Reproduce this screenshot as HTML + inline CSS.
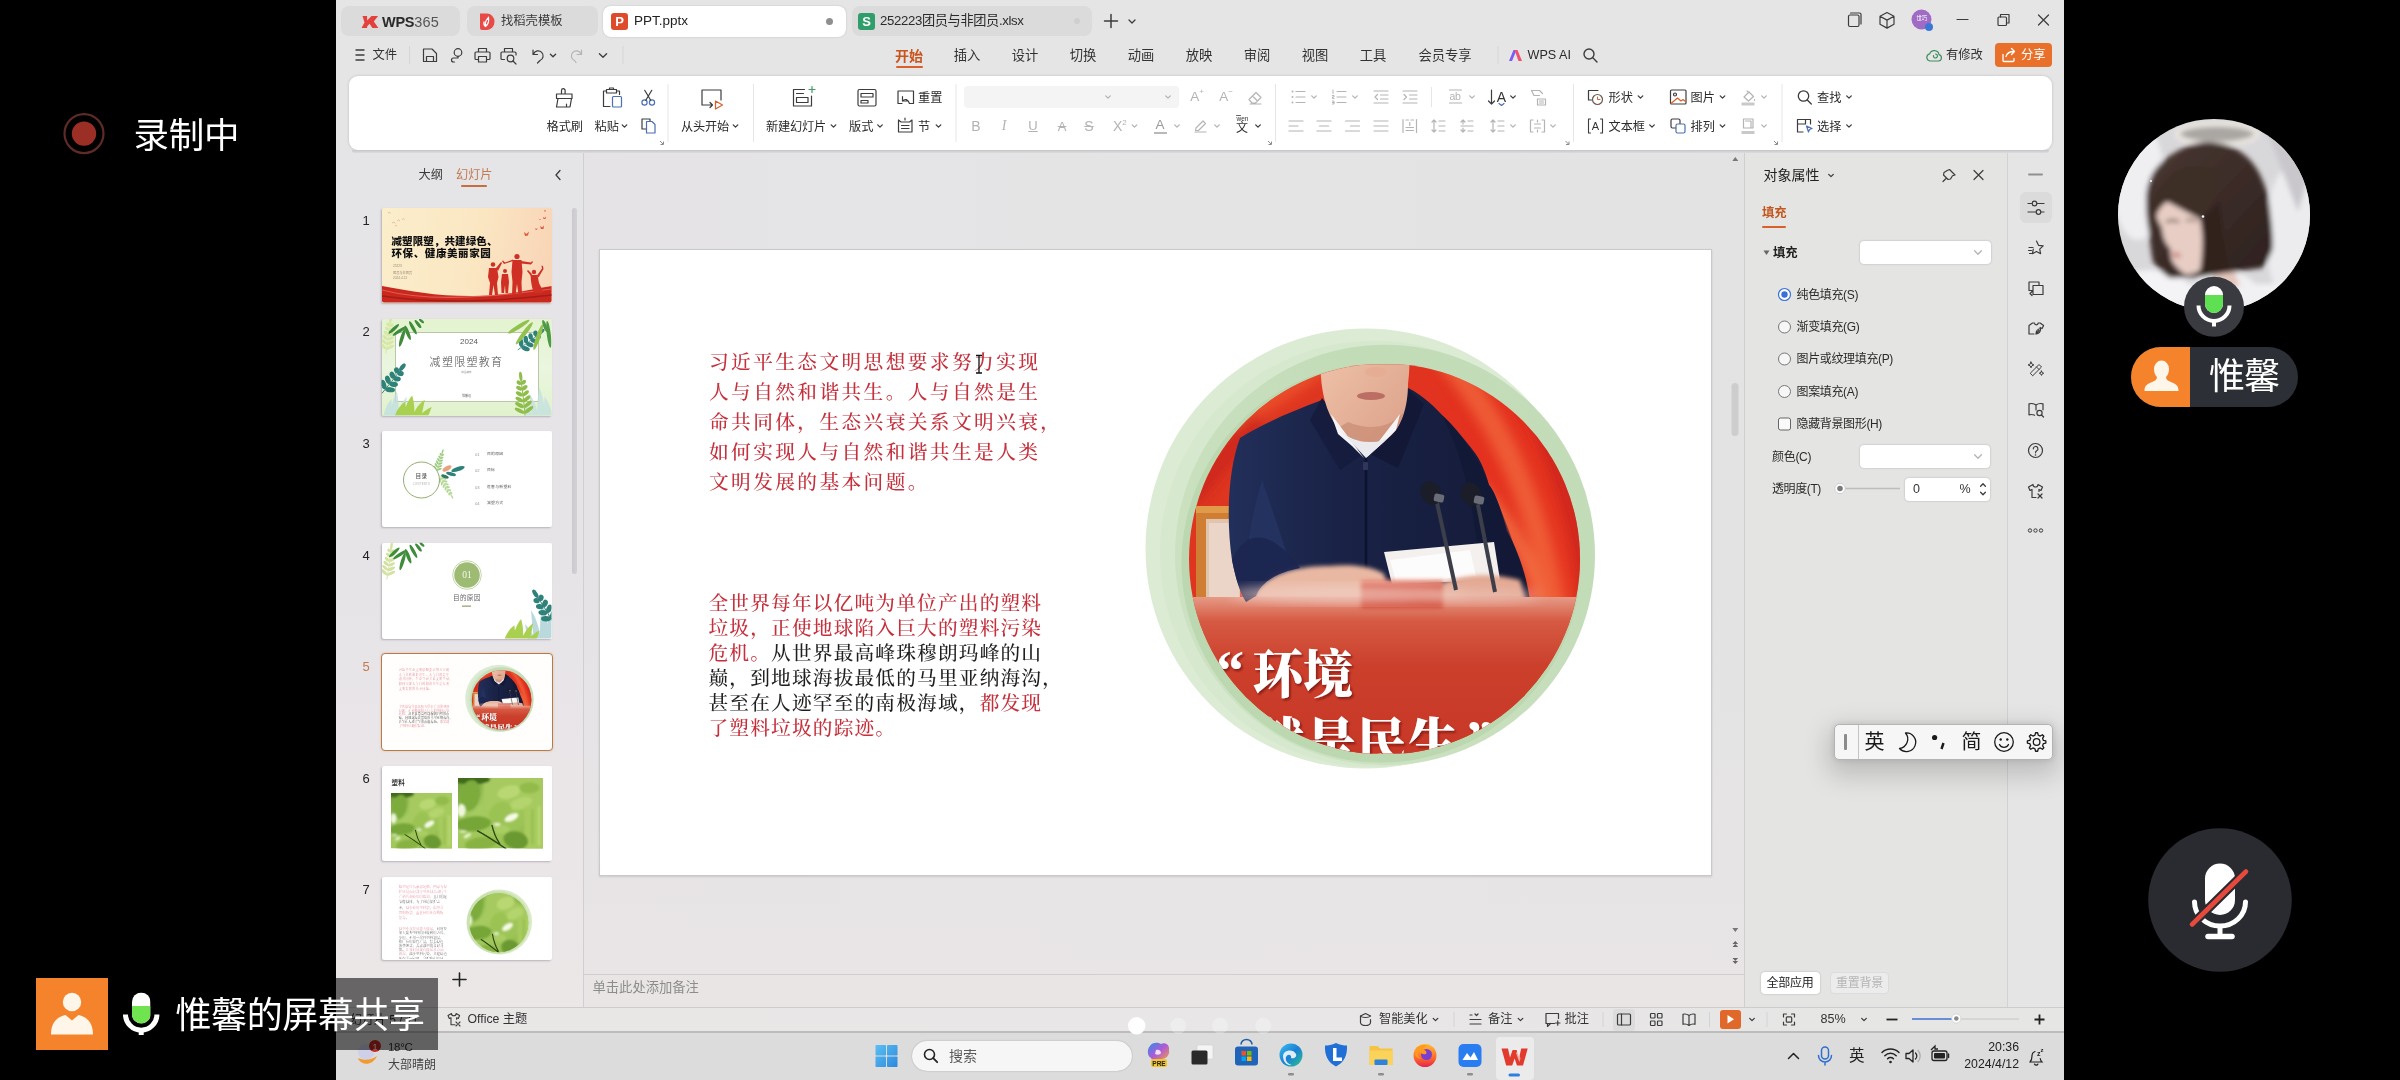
<!DOCTYPE html>
<html lang="zh-CN">
<head>
<meta charset="utf-8">
<title>WPS PPT screen share</title>
<style>
*{box-sizing:border-box;margin:0;padding:0}
html,body{width:2400px;height:1080px;overflow:hidden;background:#000}
body{position:relative;will-change:transform;font-family:"Liberation Sans","Noto Sans CJK SC",sans-serif;color:#2b2b2b;font-size:12px}
.a{position:absolute}
.t{position:absolute;white-space:nowrap;line-height:1}
svg{position:absolute;overflow:visible}
svg.L{left:0;top:0;width:2400px;height:1080px;pointer-events:none}
.ic{fill:none;stroke:#3c3c3c;stroke-width:1.2;stroke-linecap:round;stroke-linejoin:round}
.ig{fill:none;stroke:#b4b4b4;stroke-width:1.2;stroke-linecap:round;stroke-linejoin:round}
#app{position:absolute;left:336px;top:0;width:1728px;height:1080px;background:#e5e5e5}
.serif{font-family:"Liberation Serif","Noto Serif CJK SC",serif}
</style>
</head>
<body>
<div id="app"></div>

<!-- 10_tabs.py -->
<div class="a" style="left:341px;top:6px;width:119px;height:30px;background:#dbdbdb;border-radius:8px"></div><div class="a" style="left:467px;top:6px;width:131px;height:30px;background:#dbdbdb;border-radius:8px"></div><div class="a" style="left:603px;top:5.5px;width:243px;height:31px;background:#fff;border-radius:8px;box-shadow:0 0 2px rgba(0,0,0,.18)"></div><div class="a" style="left:852px;top:6px;width:240px;height:30px;background:#dbdbdb;border-radius:8px"></div><div class="t " style="left:382px;top:14.75px;font-size:14.5px;color:#2a2a2a;font-weight:700;"><b style="font-weight:700;letter-spacing:-.3px">WPS</b><span style="color:#555;font-weight:400;letter-spacing:.2px">365</span></div><div class="t " style="left:501px;top:15.35px;font-size:12.3px;color:#3a3a3a;font-weight:400;">找稻壳模板</div><div class="t " style="left:634px;top:14.25px;font-size:13.5px;color:#222;font-weight:400;">PPT.pptx</div><div class="t " style="left:880px;top:14.4px;font-size:13.2px;color:#2b2b2b;font-weight:400;letter-spacing:-.35px">252223团员与非团员.xlsx</div><div class="a" style="left:826px;top:18px;width:7px;height:7px;background:#8f8f8f;border-radius:50%"></div><div class="a" style="left:1073.5px;top:18px;width:6px;height:6px;background:#cfcfcf;border-radius:50%"></div><svg class="L" viewBox="0 0 2400 1080"><path d="M362.5 16 h4.6 l0 4.6 l4.4 -4.6 h6.6 l-4.3 5.6 l4.6 6.4 h-6 l-2.9 -4.2 l-2.4 2.6 v1.6 h-5.6 l3 -5.5z" fill="#e5413c"/><path d="M480 13.5 h7 a7.5 8.2 0 0 1 0 16.4 h-5 a2 2 0 0 1 -2 -2z" fill="#e84a45"/><path d="M486 26 c-1.5-3 0-6 2.5-8.5 c.6 3.4 0 6.2 -2.5 8.500 M485.500 26.500 c-1.500-1.200 -2-2.800 -1.500-4.600" fill="none" stroke="#fff" stroke-width="1.200" stroke-linecap="round"/><rect x="611" y="13" width="17" height="17" rx="3" fill="#dd4b2b"/><text x="619.5" y="26.3" font-family="Liberation Sans, sans-serif" font-weight="700" font-size="13" fill="#fff" text-anchor="middle">P</text><rect x="858" y="13" width="17" height="17" rx="3" fill="#2f9e6b"/><text x="866.5" y="26.300" font-family="Liberation Sans, sans-serif" font-weight="700" font-size="13" fill="#fff" text-anchor="middle">S</text><path class="ic" style="stroke-width:1.5" d="M1104.500 21 h13 M1111 14.500 v13"/><path class="ic" style="stroke-width:1.3" d="M1129 20 l3 3 l3 -3"/><rect class="ic" x="1848.500" y="15" width="10.500" height="11.500" rx="1.500"/><path class="ic" d="M1850.500 13 h9 a1.500 1.500 0 0 1 1.500 1.500 v9.500"/><path class="ic" d="M1887 12.500 l7 3.800 v8 l-7 3.800 l-7 -3.800 v-8z M1880 16.300 l7 3.800 l7 -3.800 M1887 20.100 v8"/><circle cx="1921.500" cy="19.500" r="10" fill="#a06bc4"/><circle cx="1929" cy="27" r="4" fill="#3a78d8"/><path class="ic" d="M1957 19.500 h11"/><rect class="ic" x="1998" y="17" width="8.500" height="8.500" rx="1"/><path class="ic" d="M2000.500 17 v-2.500 h8.500 v8.500 h-2.500"/><path class="ic" d="M2038.500 15 l10 10 M2048.500 15 l-10 10"/></svg><div class="t " style="left:1916.5px;top:15.75px;font-size:5.5px;color:#fff;font-weight:400;letter-spacing:-.3px">世巧</div>
<!-- 11_menu.py -->
<div class="t " style="left:372.5px;top:48.85px;font-size:12.3px;color:#333;font-weight:400;">文件</div><div class="t " style="left:909px;top:48.5px;font-size:14px;color:#c8541e;font-weight:700;transform:translateX(-50%);">开始</div><div class="a" style="left:895.5px;top:66px;width:27px;height:2px;background:#d9602a;border-radius:1px"></div><div class="t " style="left:967px;top:48.85px;font-size:13.3px;color:#333;font-weight:400;transform:translateX(-50%);">插入</div><div class="t " style="left:1025px;top:48.85px;font-size:13.3px;color:#333;font-weight:400;transform:translateX(-50%);">设计</div><div class="t " style="left:1083px;top:48.85px;font-size:13.3px;color:#333;font-weight:400;transform:translateX(-50%);">切换</div><div class="t " style="left:1141px;top:48.85px;font-size:13.3px;color:#333;font-weight:400;transform:translateX(-50%);">动画</div><div class="t " style="left:1199px;top:48.85px;font-size:13.3px;color:#333;font-weight:400;transform:translateX(-50%);">放映</div><div class="t " style="left:1257px;top:48.85px;font-size:13.3px;color:#333;font-weight:400;transform:translateX(-50%);">审阅</div><div class="t " style="left:1315px;top:48.85px;font-size:13.3px;color:#333;font-weight:400;transform:translateX(-50%);">视图</div><div class="t " style="left:1373px;top:48.85px;font-size:13.3px;color:#333;font-weight:400;transform:translateX(-50%);">工具</div><div class="t " style="left:1445px;top:48.85px;font-size:13.3px;color:#333;font-weight:400;transform:translateX(-50%);">会员专享</div><div class="t " style="left:1527.5px;top:49.2px;font-size:12.6px;color:#2b2b2b;font-weight:400;">WPS AI</div><div class="t " style="left:1946px;top:49.35px;font-size:12.3px;color:#333;font-weight:400;">有修改</div><div class="a" style="left:1995px;top:43px;width:56.5px;height:24px;background:#e8702a;border-radius:4px"></div><div class="t " style="left:2021px;top:49.35px;font-size:12.3px;color:#fff;font-weight:400;">分享</div><svg class="L" viewBox="0 0 2400 1080"><path class="ic" style="stroke-width:1.4" d="M356 50 h8 M356 55 h8 M356 60 h8"/><path d="M409.500 46 v18 M623 46 v18 M1498 46 v18" stroke="#d6d5d5" stroke-width="1" fill="none"/><path class="ic" d="M423.500 49 h8.500 l4.500 4.500 v8 h-13z M426.500 61.500 v-5 h7 v5"/><circle class="ic" cx="458" cy="52.500" r="3.800"/><path class="ic" d="M458 56.300 v1.700 h-4.500 a2 2 0 0 0 0 4 h1"/><path class="ic" d="M478.500 52 v-3.500 h8 v3.500 M478.500 59.500 h-2.500 a1 1 0 0 1 -1 -1 v-5.500 a1 1 0 0 1 1 -1 h13 a1 1 0 0 1 1 1 v5.500 a1 1 0 0 1 -1 1 h-2.500 M478.500 56.500 h8 v5.500 h-8z"/><path class="ic" d="M504.500 52 v-3.500 h8 v3.500 M504.500 59.500 h-2.500 a1 1 0 0 1 -1 -1 v-5.500 a1 1 0 0 1 1 -1 h13 a1 1 0 0 1 1 1 v2"/><circle class="ic" cx="510.500" cy="58.500" r="3.300"/><path class="ic" d="M513 61 l3 3"/><path class="ic" d="M533 50 v4.500 h4.500 M533.500 54 a5 5 0 1 1 6.500 6.500 l-2.500 2.500"/><path class="ic" style="stroke-width:1.3" d="M550.4 54.2 l2.6 2.6 l2.6 -2.6"/><path class="ig" d="M581.500 50 v4.500 h-4.500 M581 54 a5 5 0 1 0 -6.500 6.500 l1.500 2"/><path class="ic" style="stroke-width:1.3" d="M599.4 53.7 l3.6 3.6 l3.6 -3.6"/><path d="M1509 61 l4.500 -11 l3 0 l-4.500 11z" fill="#7a5af8"/><path d="M1514.500 50 l3 0 l4.500 11 l-3.500 0z" fill="#f0506e"/><circle class="ic" cx="1589" cy="54" r="5" style="stroke-width:1.400"/><path class="ic" style="stroke-width:1.400" d="M1592.800 57.800 l4.200 4.200"/><path class="ic" d="M1930 61 h8.500 a3.200 3.200 0 0 0 .5 -6.300 a4.800 4.800 0 0 0 -9.300 -.8 a3.600 3.600 0 0 0 .3 7.100z M1933.500 55.500 a2 2 0 1 0 2 -1.500" style="stroke:#3f8f5f"/><path d="M2003 54.500 v6 a1 1 0 0 0 1 1 h9 a1 1 0 0 0 1 -1 v-2 M2006 56.500 c1 -3.500 4 -5 8 -5 M2011.500 48.500 l3 3 l-3 3" fill="none" stroke="#fff" stroke-width="1.300" stroke-linecap="round" stroke-linejoin="round"/></svg>
<!-- 20_ribbon.py -->
<div class="a" style="left:348.5px;top:75.5px;width:1703.5px;height:74px;background:#fff;border-radius:9px;box-shadow:0 0 3px rgba(0,0,0,.18)"></div><div class="t " style="left:546.5px;top:120.5px;font-size:12.2px;color:#2b2b2b;font-weight:400;">格式刷</div><div class="t " style="left:594.5px;top:120.5px;font-size:12.2px;color:#2b2b2b;font-weight:400;">粘贴</div><div class="t " style="left:681px;top:120.5px;font-size:12.2px;color:#2b2b2b;font-weight:400;letter-spacing:-.2px">从头开始</div><div class="t " style="left:766px;top:120.5px;font-size:12.2px;color:#2b2b2b;font-weight:400;letter-spacing:-.2px">新建幻灯片</div><div class="t " style="left:849px;top:120.5px;font-size:12.2px;color:#2b2b2b;font-weight:400;">版式</div><div class="t " style="left:918px;top:92.2px;font-size:12.2px;color:#2b2b2b;font-weight:400;">重置</div><div class="t " style="left:918px;top:120.5px;font-size:12.2px;color:#2b2b2b;font-weight:400;">节</div><div class="t " style="left:1608.5px;top:92.2px;font-size:12.2px;color:#2b2b2b;font-weight:400;">形状</div><div class="t " style="left:1608.5px;top:120.5px;font-size:12.2px;color:#2b2b2b;font-weight:400;">文本框</div><div class="t " style="left:1690.5px;top:92.2px;font-size:12.2px;color:#2b2b2b;font-weight:400;">图片</div><div class="t " style="left:1690.5px;top:120.5px;font-size:12.2px;color:#2b2b2b;font-weight:400;">排列</div><div class="t " style="left:1817px;top:92.2px;font-size:12.2px;color:#2b2b2b;font-weight:400;">查找</div><div class="t " style="left:1817px;top:120.5px;font-size:12.2px;color:#2b2b2b;font-weight:400;">选择</div><div class="a" style="left:964px;top:86px;width:215px;height:22px;background:#f4f4f4;border-radius:4px"></div><div class="t " style="left:976px;top:119px;font-size:14px;color:#b3b3b3;font-weight:400;transform:translateX(-50%);">B</div><div class="t serif" style="left:1004px;top:119px;font-size:14px;color:#b3b3b3;font-weight:400;transform:translateX(-50%);"><i>I</i></div><div class="t " style="left:1033px;top:119px;font-size:13px;color:#b3b3b3;font-weight:400;transform:translateX(-50%);text-decoration:underline">U</div><div class="t " style="left:1062px;top:119.5px;font-size:13px;color:#b3b3b3;font-weight:400;transform:translateX(-50%);text-decoration:line-through">A</div><div class="t " style="left:1089px;top:119px;font-size:14px;color:#b3b3b3;font-weight:400;transform:translateX(-50%);text-decoration:line-through">S</div><div class="t " style="left:1113px;top:119px;font-size:14px;color:#b3b3b3;font-weight:400;">X<sup style="font-size:8px;vertical-align:6px;line-height:0">2</sup></div><div class="t " style="left:1160px;top:117.75px;font-size:13.5px;color:#9a9a9a;font-weight:400;transform:translateX(-50%);">A</div><div class="a" style="left:1153.5px;top:131.5px;width:13px;height:2.5px;background:#b9b9b9;"></div><div class="t " style="left:1197px;top:90.25px;font-size:13.5px;color:#b3b3b3;font-weight:400;transform:translateX(-50%);">A<sup style="font-size:8px;vertical-align:7px;line-height:0">+</sup></div><div class="t " style="left:1226px;top:90.25px;font-size:13.5px;color:#b3b3b3;font-weight:400;transform:translateX(-50%);">A<sup style="font-size:8px;vertical-align:7px;line-height:0">−</sup></div><div class="t " style="left:1242px;top:121.5px;font-size:12px;color:#333;font-weight:400;transform:translateX(-50%);">文</div><div class="t " style="left:1242.5px;top:115.75px;font-size:6.5px;color:#333;font-weight:400;transform:translateX(-50%);">wen</div><div class="t " style="left:1449.5px;top:90.75px;font-size:10.5px;color:#b3b3b3;font-weight:400;letter-spacing:-.3px">ab</div><div class="t " style="left:1501.5px;top:89.5px;font-size:14px;color:#333;font-weight:400;transform:translateX(-50%);">A</div><div class="t " style="left:1595.5px;top:121px;font-size:11px;color:#333;font-weight:400;transform:translateX(-50%);">A</div><svg class="L" viewBox="0 0 2400 1080"><path d="M668 84 v58" stroke="#e6e6e6" stroke-width="1"/><path d="M753.5 84 v58" stroke="#e6e6e6" stroke-width="1"/><path d="M956 84 v58" stroke="#e6e6e6" stroke-width="1"/><path d="M1275.5 84 v58" stroke="#e6e6e6" stroke-width="1"/><path d="M1573.5 84 v58" stroke="#e6e6e6" stroke-width="1"/><path d="M1782 84 v58" stroke="#e6e6e6" stroke-width="1"/><path d="M1431.500 87 v20" stroke="#e6e6e6" stroke-width="1"/><path d="M660 141 l3 3 M663.5 141.500 v3 h-3" stroke="#8a8a8a" stroke-width="1" fill="none"/><path d="M1268 141 l3 3 M1271.5 141.500 v3 h-3" stroke="#8a8a8a" stroke-width="1" fill="none"/><path d="M1565.5 141 l3 3 M1569 141.500 v3 h-3" stroke="#8a8a8a" stroke-width="1" fill="none"/><path d="M1774 141 l3 3 M1777.5 141.500 v3 h-3" stroke="#8a8a8a" stroke-width="1" fill="none"/><path class="ic" style="stroke-width:1.3" d="M622.2 124.85 l2.3 2.3 l2.3 -2.3"/><path class="ic" style="stroke-width:1.3" d="M733.2 124.85 l2.3 2.3 l2.3 -2.3"/><path class="ic" style="stroke-width:1.3" d="M831.2 124.85 l2.3 2.3 l2.3 -2.3"/><path class="ic" style="stroke-width:1.3" d="M877.7 124.85 l2.3 2.3 l2.3 -2.3"/><path class="ic" style="stroke-width:1.3" d="M936.2 124.85 l2.3 2.3 l2.3 -2.3"/><path class="ic" style="stroke-width:1.3" d="M1255.7 124.85 l2.3 2.3 l2.3 -2.3"/><path class="ic" style="stroke-width:1.3" d="M1510.7 95.85 l2.3 2.3 l2.3 -2.3"/><path class="ic" style="stroke-width:1.3" d="M1638.2 95.85 l2.3 2.3 l2.3 -2.3"/><path class="ic" style="stroke-width:1.3" d="M1649.7 124.85 l2.3 2.3 l2.3 -2.3"/><path class="ic" style="stroke-width:1.3" d="M1720.2 95.85 l2.3 2.3 l2.3 -2.3"/><path class="ic" style="stroke-width:1.3" d="M1720.2 124.85 l2.3 2.3 l2.3 -2.3"/><path class="ic" style="stroke-width:1.3" d="M1846.7 95.85 l2.3 2.3 l2.3 -2.3"/><path class="ic" style="stroke-width:1.3" d="M1846.7 124.85 l2.3 2.3 l2.3 -2.3"/><path class="ig" style="stroke-width:1.3" d="M1105.7 95.85 l2.3 2.3 l2.3 -2.3"/><path class="ig" style="stroke-width:1.3" d="M1165.7 95.85 l2.3 2.3 l2.3 -2.3"/><path class="ig" style="stroke-width:1.3" d="M1132.2 124.85 l2.3 2.3 l2.3 -2.3"/><path class="ig" style="stroke-width:1.3" d="M1174.7 124.85 l2.3 2.3 l2.3 -2.3"/><path class="ig" style="stroke-width:1.3" d="M1214.7 124.85 l2.3 2.3 l2.3 -2.3"/><path class="ig" style="stroke-width:1.3" d="M1311.7 95.85 l2.3 2.3 l2.3 -2.3"/><path class="ig" style="stroke-width:1.3" d="M1352.7 95.85 l2.3 2.3 l2.3 -2.3"/><path class="ig" style="stroke-width:1.3" d="M1469.7 95.85 l2.3 2.3 l2.3 -2.3"/><path class="ig" style="stroke-width:1.3" d="M1510.7 124.85 l2.3 2.3 l2.3 -2.3"/><path class="ig" style="stroke-width:1.3" d="M1550.7 124.85 l2.3 2.3 l2.3 -2.3"/><path class="ig" style="stroke-width:1.3" d="M1761.7 95.85 l2.3 2.3 l2.3 -2.3"/><path class="ig" style="stroke-width:1.3" d="M1761.7 124.85 l2.3 2.3 l2.3 -2.3"/><path class="ic" d="M561.500 94 v-3.500 a1.800 1.800 0 0 1 3.600 0 v3.500 M556.500 94 h15.500 v4.500 h-15.500z M558 98.500 l-1.500 8.500 h13.500 l1.500 -8.500 M566.500 107 v-3"/><path class="ic" d="M606.500 91 h-3 v15.500 h6.500 M616.500 91 h3 v3.500 M606.500 89.500 h10 v3.500 h-10z M609.500 89.500 v-1.500 h4 v1.500"/><rect class="ic" x="612.500" y="96.500" width="9" height="10.500" rx="1" style="stroke:#4a6fb5"/><circle class="ic" cx="644.500" cy="102.500" r="2.600" style="stroke:#4a6fb5"/><circle class="ic" cx="652" cy="102.500" r="2.600" style="stroke:#4a6fb5"/><path class="ic" d="M645.800 100.300 l6 -10 M650.700 100.300 l-6 -10"/><path class="ic" d="M646.500 129 h-4.500 v-10 h8 v2.500"/><path class="ic" d="M646.500 121.500 h5.500 l3 3 v8.500 h-8.500z" style="stroke:#4a6fb5"/><path class="ic" d="M721 100 v-10 h-19 v15 h10.500 M710 102.500 l2.500 2.500 l-2.500 2.500"/><path class="ic" d="M715.500 101 l7 4 l-7 4z" style="stroke:#d9602a"/><path class="ic" d="M804.500 89.500 h-11 v16.500 h18 v-10"/><path class="ic" d="M796.500 93.500 h7 M796.500 97.500 h11.500 v5 h-11.500z"/><path class="ic" d="M809 89.500 h6 M812 86.500 v6" style="stroke:#3f9a63"/><rect class="ic" x="858" y="89.500" width="18" height="16.500" rx="1.500"/><path class="ic" d="M861 93.500 h12 v3.500 h-12z M861 100.500 h7 v2.500 h-7z"/><path class="ic" d="M902 103.500 h-4 v-12.500 h15.500 v12.500 h-4 M902.500 96.500 v4.500 h4.500 M902.500 101 c2.500 -2.500 5.500 -2 7 2.500"/><path class="ic" d="M898.500 120 v12 h13.500 v-12 M898.500 120 l2.500 2 h8.500 l2.500 -2 M901.500 125.500 h7.500 M901.500 128.500 h7.500 M905 118 v2"/><path class="ig" d="M1249 99.500 l7 -7 l5 5 l-5.500 5.500 h-3.500z M1252.500 96 l5 5 M1250 104 h11"/><path class="ig" d="M1196 128 l7 -7 l2.500 2.500 l-7 7 h-3z M1195 132 h11"/><path class="ic" d="M1236.500 115.500 h4" style="stroke-width:.8"/><path class="ig" d="M1296 91.500 h9 M1296 97 h9 M1296 102.500 h9"/><circle cx="1292.500" cy="91.500" r="1" fill="#b4b4b4"/><circle cx="1292.500" cy="97" r="1" fill="#b4b4b4"/><circle cx="1292.500" cy="102.500" r="1" fill="#b4b4b4"/><path class="ig" d="M1337 91.500 h9 M1337 97 h9 M1337 102.500 h9 M1333 90 v3.500 M1332.500 95.500 h1.500 v1.500 h-1.500 v1.500 h1.500 M1332.500 101 h1.500 v3 h-1.500 M1332.500 102.500 h1.500" style="stroke-width:1"/><path class="ig" d="M1374 91 h14 M1380.500 95 h7.500 M1380.500 99 h7.500 M1374 103 h14 M1377.500 94.500 l-2.500 2.500 l2.500 2.500"/><path class="ig" d="M1403 91 h14 M1409.500 95 h7.500 M1409.500 99 h7.500 M1403 103 h14 M1404 94.500 l2.500 2.500 l-2.500 2.500"/><path class="ig" d="M1449.500 90 h12 M1449.500 103 h12"/><path class="ic" d="M1491.500 90 v14 M1488.500 101 l3 3 l3 -3"/><path class="ic" d="M1499 103.500 l2.500 2 l2.500 -2" style="stroke:#4a6fb5"/><path class="ig" d="M1531.500 90.500 h8 l3 3 M1531.500 90.500 l2.500 5 h5.500 M1537.500 99 h8 v6 h-8z M1539.500 101 h4 M1539.500 103 h4"/><path class="ig" d="M1289 121 h14 M1289 126 h9 M1289 131 h14 "/><path class="ig" d="M1317 121 h14 M1319.5 126 h9 M1317 131 h14 "/><path class="ig" d="M1345.5 121 h14 M1350.5 126 h9 M1345.5 131 h14 "/><path class="ig" d="M1374 121 h14 M1374 126 h14 M1374 131 h14 "/><path class="ig" d="M1403 119.500 v13 M1416.500 119.500 v13 M1406 120 h2.500 M1411 120 h2.500 M1406 130.500 h7.500 M1406 127.500 h7.500 M1409.750 122.500 v3"/><path class="ig" d="M1434 120 v12 M1432 122 l2 -2 l2 2 M1432 130 l2 2 l2 -2 M1439 121 h6 M1439 126 h6 M1439 131 h6"/><path class="ig" d="M1463 120 v4 M1461 122 l2 -2 l2 2 M1463 128 v4 M1461 130 l2 2 l2 -2 M1461 126 h12 M1468 121 h5 M1468 131 h5"/><path class="ig" d="M1493 120 v12 M1491 122 l2 -2 l2 2 M1491 130 l2 2 l2 -2 M1498 121 h6 M1498 126 h6 M1498 131 h6"/><path class="ig" d="M1533 120 h-2.500 v12 h2.500 M1542 120 h2.500 v12 h-2.500 M1534.500 124 h6 M1534.500 128 h6 M1537.500 120 v2 M1537.500 130 v2"/><path class="ic" d="M1598 90.500 h-9.500 v9.500 h3"/><circle class="ic" cx="1597.500" cy="99.500" r="5" style="stroke:#6a5a52"/><path class="ic" d="M1597.500 97 v2.500 h2.500" style="stroke:#d9602a;stroke-width:1"/><path class="ic" d="M1588.500 119 v14 M1602.500 119 v14 M1588.500 119 h2 M1588.500 133 h2 M1600.500 119 h2 M1600.500 133 h2" style="stroke-width:1.100"/><rect class="ic" x="1670.500" y="90" width="15.500" height="14" rx="1"/><circle class="ic" cx="1675" cy="94.500" r="1.500"/><path class="ic" d="M1671 103.500 l6.500 -5.500 l3.500 3 l2 -1.500 l2.500 2" style="stroke:#d9602a"/><rect class="ic" x="1671" y="119" width="9" height="9" rx="1.500"/><rect class="ic" x="1676" y="124" width="9" height="9" rx="1.500" style="stroke:#4a6fb5;fill:#fff"/><path class="ig" d="M1744 97 l5 -5 l4.500 4.500 l-5 4.500z M1747 91 l2 1.500 M1754.500 99.500 v1"/><rect x="1741.500" y="102.500" width="13" height="3" fill="#c9c9c9"/><path class="ig" d="M1743.500 119 h9.500 v9 h-9.500z M1745.500 121 h5.500 v7"/><rect x="1741.500" y="131" width="13" height="3" fill="#c9c9c9"/><circle class="ic" cx="1803.500" cy="96" r="5.200" style="stroke-width:1.300"/><path class="ic" d="M1807.300 100 l4 4" style="stroke-width:1.300"/><path class="ic" d="M1810.500 124 v-4.500 h-13 v12.500 h5.500 M1797.500 124 h8 M1805.500 119.500 v4.500"/><path class="ic" d="M1806.500 126 l5.500 2.500 l-2.500 1 l-1 2.500z" style="stroke:#4a6fb5"/></svg>
<!-- 30_left.py -->
<svg width="0" height="0" style="position:absolute"><defs><g id="frond"><path d="M0 2 C1 -12 0 -28 0 -40" stroke="currentColor" stroke-width="1.2" fill="none"/><ellipse cx="-6" cy="0" rx="6" ry="2.1" fill="currentColor" transform="translate(0,-4) rotate(32)"/><ellipse cx="6" cy="0" rx="6" ry="2.1" fill="currentColor" transform="translate(0,-4) rotate(-32)"/><ellipse cx="-5.4" cy="0" rx="5.4" ry="2.1" fill="currentColor" transform="translate(0,-10.2) rotate(32)"/><ellipse cx="5.4" cy="0" rx="5.4" ry="2.1" fill="currentColor" transform="translate(0,-10.2) rotate(-32)"/><ellipse cx="-4.8" cy="0" rx="4.8" ry="2.1" fill="currentColor" transform="translate(0,-16.4) rotate(32)"/><ellipse cx="4.8" cy="0" rx="4.8" ry="2.1" fill="currentColor" transform="translate(0,-16.4) rotate(-32)"/><ellipse cx="-4.2" cy="0" rx="4.2" ry="2.1" fill="currentColor" transform="translate(0,-22.6) rotate(32)"/><ellipse cx="4.2" cy="0" rx="4.2" ry="2.1" fill="currentColor" transform="translate(0,-22.6) rotate(-32)"/><ellipse cx="-3.6" cy="0" rx="3.6" ry="2.1" fill="currentColor" transform="translate(0,-28.8) rotate(32)"/><ellipse cx="3.6" cy="0" rx="3.6" ry="2.1" fill="currentColor" transform="translate(0,-28.8) rotate(-32)"/><ellipse cx="-3" cy="0" rx="3" ry="2.1" fill="currentColor" transform="translate(0,-35) rotate(32)"/><ellipse cx="3" cy="0" rx="3" ry="2.1" fill="currentColor" transform="translate(0,-35) rotate(-32)"/><ellipse cx="0" cy="-43" rx="1.800" ry="5" fill="currentColor"/></g><g id="palmTL"><ellipse cx="12.3" cy="9.9" rx="7" ry="1.65" transform="rotate(-42 12.3 9.9)" fill="currentColor"/><ellipse cx="17.8" cy="12.1" rx="8" ry="1.7" transform="rotate(-34 17.8 12.1)" fill="currentColor"/><ellipse cx="20.6" cy="18.8" rx="9.25" ry="1.8" transform="rotate(-73 20.6 18.8)" fill="currentColor"/><ellipse cx="26.2" cy="13.8" rx="7.75" ry="1.8" transform="rotate(69 26.2 13.8)" fill="currentColor"/><ellipse cx="31.4" cy="8.8" rx="7.5" ry="1.7" transform="rotate(61 31.4 8.8)" fill="currentColor"/><ellipse cx="36.5" cy="5" rx="5" ry="1.5" transform="rotate(52 36.5 5)" fill="currentColor"/><ellipse cx="40" cy="2" rx="3" ry="1.25" transform="rotate(40 40 2)" fill="currentColor"/></g><g id="palmTR"><ellipse cx="-32.7" cy="7.7" rx="12.5" ry="2.1" transform="rotate(-32 -32.7 7.7)" fill="currentColor"/><ellipse cx="-27.2" cy="14.3" rx="13.85" ry="2.2" transform="rotate(-53 -27.2 14.3)" fill="currentColor"/><ellipse cx="-13.3" cy="18.2" rx="13.5" ry="2.2" transform="rotate(-71 -13.3 18.2)" fill="currentColor"/></g><g id="palmTRd"><ellipse cx="-2.7" cy="15.4" rx="13.5" ry="2" transform="rotate(83 -2.7 15.4)" fill="currentColor"/><ellipse cx="-6.6" cy="7.1" rx="6.5" ry="1.7" transform="rotate(70 -6.6 7.1)" fill="currentColor"/></g><g id="twig"><path d="M0 2 C0 -10 1 -20 0 -32" stroke="currentColor" stroke-width="1" fill="none"/><ellipse cx="-5.7" cy="0" rx="5.7" ry="2.9" fill="currentColor" transform="translate(0,-4) rotate(30)"/><ellipse cx="5.7" cy="0" rx="5.7" ry="2.9" fill="currentColor" transform="translate(0,-4) rotate(-30)"/><ellipse cx="-4.98" cy="0" rx="4.98" ry="2.9" fill="currentColor" transform="translate(0,-11.5) rotate(30)"/><ellipse cx="4.98" cy="0" rx="4.98" ry="2.9" fill="currentColor" transform="translate(0,-11.5) rotate(-30)"/><ellipse cx="-4.26" cy="0" rx="4.26" ry="2.9" fill="currentColor" transform="translate(0,-19) rotate(30)"/><ellipse cx="4.26" cy="0" rx="4.26" ry="2.9" fill="currentColor" transform="translate(0,-19) rotate(-30)"/><ellipse cx="-3.54" cy="0" rx="3.54" ry="2.9" fill="currentColor" transform="translate(0,-26.5) rotate(30)"/><ellipse cx="3.54" cy="0" rx="3.54" ry="2.9" fill="currentColor" transform="translate(0,-26.5) rotate(-30)"/><ellipse cx="0" cy="-35" rx="2.500" ry="5" fill="currentColor"/></g><g id="tuft"><path d="M-14 0 C-12 -6 -9 -10 -5 -13 C-5 -8 -4 -4 -2 0z M-6 0 C-5 -8 -3 -14 1 -19 C3 -12 3 -6 3 0z M2 0 C4 -7 7 -11 12 -15 C11 -9 10 -4 9 0z M8 0 C11 -4 14 -6 18 -8 C17 -5 16 -2 15 0z" fill="currentColor"/></g><filter id="bl1" x="-10%" y="-10%" width="120%" height="120%"><feGaussianBlur stdDeviation="1.5"/></filter><linearGradient id="lpg" x1="0" y1="0" x2="1" y2="1"><stop offset="0" stop-color="#6f9e35"/><stop offset=".35" stop-color="#a5cb61"/><stop offset=".7" stop-color="#9cc356"/><stop offset="1" stop-color="#7aa63a"/></linearGradient><g id="leafphoto"><rect x="0" y="0" width="100" height="100" fill="url(#lpg)"/><g filter="url(#bl1)"><rect x="30" y="-5" width="75" height="50" fill="#a6ca5e"/><ellipse cx="60" cy="20" rx="14" ry="9" fill="#b9d873" transform="rotate(-20 60 20)"/><ellipse cx="84" cy="14" rx="12" ry="8" fill="#93bb4c"/><ellipse cx="74" cy="36" rx="14" ry="8" fill="#b4d46d" transform="rotate(-25 74 36)"/><rect x="78" y="40" width="26" height="64" fill="#a8cb5f"/><rect x="86" y="44" width="3" height="50" fill="#97bf50"/><rect x="94" y="40" width="3" height="56" fill="#b9d876"/><ellipse cx="16" cy="2" rx="22" ry="7" fill="#3f6a1c"/><ellipse cx="14" cy="25" rx="12" ry="22" fill="#7dac3d" transform="rotate(8 14 25)"/><ellipse cx="50" cy="50" rx="13" ry="17" fill="#9bc353" transform="rotate(20 50 50)"/><ellipse cx="4" cy="46" rx="5" ry="9" fill="#eef7da"/><ellipse cx="63" cy="56" rx="9" ry="4.500" fill="#f5fbe6" transform="rotate(-33 63 56)"/><ellipse cx="18" cy="65" rx="21" ry="10.500" fill="#76a638" transform="rotate(-6 18 65)"/><ellipse cx="52" cy="73" rx="9" ry="6" fill="#a9cd63"/><ellipse cx="46" cy="66" rx="4" ry="2" fill="#e8f4cf"/><ellipse cx="68" cy="88" rx="15" ry="12" fill="#6a9930" transform="rotate(25 68 88)"/><ellipse cx="27" cy="93" rx="19" ry="9" fill="#88b343" transform="rotate(-10 27 93)"/><ellipse cx="11" cy="82" rx="5" ry="2.200" fill="#eaf5d0" transform="rotate(-35 11 82)"/><ellipse cx="6" cy="76" rx="4" ry="1.500" fill="#e4f1c8"/></g><path d="M23 75 C34 82 45 91 56 100 M40 67 C42 78 45 86 49 93" stroke="#2c4813" stroke-width="1.700" fill="none" stroke-linecap="round"/></g></defs></svg><div class="a" style="left:336px;top:150px;width:247.5px;height:857px;background:linear-gradient(180deg,#e5e4e7 0%,#e7e4e8 50%,#eae6e8 78%,#ebe7e7 100%);"></div><div class="a" style="left:583px;top:152px;width:1px;height:855px;background:#cfced2;"></div><div class="t " style="left:418.5px;top:169.4px;font-size:12.2px;color:#3a3a3a;font-weight:400;">大纲</div><div class="t " style="left:456px;top:169.4px;font-size:12.2px;color:#c27a52;font-weight:400;">幻灯片</div><div class="a" style="left:461px;top:185px;width:26px;height:2px;background:#c66f3c;border-radius:1px"></div><div class="a" style="left:572px;top:208px;width:4.6px;height:366px;background:linear-gradient(90deg,#cbc9ce,#d3d1d6);border-radius:2.3px"></div><div class="t " style="left:366px;top:213.5px;font-size:13px;color:#222;font-weight:400;transform:translateX(-50%);">1</div><div class="t " style="left:366px;top:324.5px;font-size:13px;color:#222;font-weight:400;transform:translateX(-50%);">2</div><div class="t " style="left:366px;top:436.5px;font-size:13px;color:#222;font-weight:400;transform:translateX(-50%);">3</div><div class="t " style="left:366px;top:548.5px;font-size:13px;color:#222;font-weight:400;transform:translateX(-50%);">4</div><div class="t " style="left:366px;top:659.5px;font-size:13px;color:#c27a52;font-weight:400;transform:translateX(-50%);">5</div><div class="t " style="left:366px;top:771.5px;font-size:13px;color:#222;font-weight:400;transform:translateX(-50%);">6</div><div class="t " style="left:366px;top:882.5px;font-size:13px;color:#222;font-weight:400;transform:translateX(-50%);">7</div><div class="a" style="left:382px;top:207.5px;width:169.5px;height:95px;background:linear-gradient(100deg,#fbeecb 0%,#fbe6c2 55%,#f8d3b6 100%);box-shadow:-1px 1px 2px rgba(90,80,100,.35);border-radius:2px;overflow:hidden"></div><div class="a" style="left:381.5px;top:319px;width:170px;height:96.5px;background:linear-gradient(180deg,#e3f3cf,#eaf6df 50%,#e1f2cd);box-shadow:-1px 1px 2px rgba(90,80,100,.35);border-radius:2px;overflow:hidden"></div><div class="a" style="left:382px;top:431px;width:169.5px;height:95.5px;background:#fff;box-shadow:-1px 1px 2px rgba(90,80,100,.35);border-radius:2px;overflow:hidden"></div><div class="a" style="left:382px;top:542.5px;width:169.5px;height:96px;background:#fff;box-shadow:-1px 1px 2px rgba(90,80,100,.35);border-radius:2px;overflow:hidden"></div><div class="a" style="left:380.5px;top:653px;width:172.5px;height:97.5px;background:#fffefc;border:1.6px solid #b87a48;border-radius:4px;box-shadow:0 0 2px rgba(220,140,80,.5)"></div><div class="a" style="left:382px;top:765.5px;width:169.5px;height:95px;background:#fff;box-shadow:-1px 1px 2px rgba(90,80,100,.35);border-radius:2px;overflow:hidden"></div><div class="a" style="left:382px;top:876.5px;width:170px;height:83px;background:#fff;box-shadow:-1px 1px 2px rgba(90,80,100,.35);border-radius:2px;overflow:hidden"></div><div class="a" style="left:395px;top:332px;width:144px;height:70px;background:#fff;border:.6px solid #b9c7a4"></div><svg class="L" viewBox="0 0 2400 1080"><defs><clipPath id="tc0"><rect x="382" y="207.5" width="169.5" height="95" rx="2"/></clipPath><clipPath id="tc1"><rect x="381.5" y="319" width="170" height="96.5" rx="2"/></clipPath><clipPath id="tc2"><rect x="382" y="431" width="169.5" height="95.5" rx="2"/></clipPath><clipPath id="tc3"><rect x="382" y="542.5" width="169.5" height="96" rx="2"/></clipPath><clipPath id="tc4"><rect x="382" y="765.5" width="169.5" height="95" rx="2"/></clipPath><clipPath id="tc5"><rect x="382" y="876.5" width="170" height="83" rx="2"/></clipPath><clipPath id="c6a"><rect x="391" y="793" width="61" height="55.500"/></clipPath><clipPath id="c6b"><rect x="458" y="778" width="85" height="70.500"/></clipPath><clipPath id="c7"><circle cx="498.800" cy="922.700" r="29.500"/></clipPath></defs><path class="ic" d="M560 170.500 l-4 4.500 l4 4.500" style="stroke-width:1.300"/><path class="ic" d="M453 979.500 h13 M459.500 973 v13" style="stroke-width:1.600;stroke:#222"/><g clip-path="url(#tc0)"><path d="M382 286 C410 291 440 297 480 296 C510 295 530 289 552 286 V303 H382z" fill="#c9281f"/><path d="M382 290 C420 300 470 300 552 289" stroke="#e8685a" stroke-width="1.200" fill="none" opacity=".8"/><path d="M382 296 C430 303 490 302 552 295" stroke="#a51c17" stroke-width="1.500" fill="none"/><g fill="#cf2f25"><circle cx="493" cy="264.500" r="2.300"/><path d="M489 268 h8 l1.500 9 l-1.500 6 l1 12 h-3 l-1.500 -10 l-1.500 10 h-3 l1 -12 l-2 -6z"/><path d="M496 268 l5 -6 l1 1 l-4 8z"/><circle cx="505" cy="271" r="2"/><path d="M502 274 h6 l1 8 l-1 11 h-2.500 l-.5 -8 l-1 8 h-2.500 l-.5 -11z"/><circle cx="517" cy="256.500" r="2.600"/><path d="M512.500 260 h9 l1 12 l-1 10 l.5 13 h-3.500 l-1.500 -11 l-1.500 11 h-3.500 l.5 -13 l-1 -10z"/><path d="M513 261 l-9 3 l-2 -3 l1 -.5 l2 2 l8 -3z M521 261 l10 1.500 l1 -1.500 l1 1 l-2 2.500 l-10 -1z"/><circle cx="534" cy="272" r="2.200"/><path d="M530.500 275 h7 l1.500 8 l3 6 l1 4 h-9 l-2 -6 l-1 -6z"/><path d="M537 275.500 l5 -7 l-.5 -3 l1.500 .5 l.5 3 l-5 8.500z M531 276 l-4 -5 l1 -1 l4 4z"/></g><g fill="#e2553f"><path d="M524 232 l2.500 2 l2.500 -2.500 l-1 4 l-3 .5z"/><path d="M540 226 l2 1.500 l2 -2 l-.5 3.500 l-2.500 0z"/><path d="M535 228 l1.200 1 l1.200 -1.200 l-.3 2 l-1.500 0z"/><path d="M543 217 l1.500 1 l1.500 -1.500 l-.5 2.500 l-2 0z"/><path d="M544 210 l1 .8 l1 -1 l-.3 1.600 l-1.300 0z"/><path d="M539 219 l.8 .6 l.8 -.8 l-.2 1.300 l-1 0z"/></g><g stroke="#d9a07a" stroke-width=".6" fill="none"><path d="M392 223 l2 -1 l1.500 1.500 M397 221 l1.500 -1 l1.500 1 M402 219.500 l1.500 -.8 l1.200 .8 M395 226 l1.200 -.6 l1 .8 M388 213 l1.500 -.6 l1.200 .8"/></g></g><g clip-path="url(#tc1)"><use href="#frond" transform="translate(386,352) rotate(8) scale(.7,.75)" style="color:#d5e6a0" opacity=".9"/><use href="#tuft" transform="translate(396,416) rotate(0) scale(.9,1.300)" style="color:#c1dfe0" opacity=".8"/><use href="#tuft" transform="translate(540,416) rotate(0) scale(-.9,1.500)" style="color:#c4e0e0" opacity=".8"/><use href="#palmTL" transform="translate(381.5,319) rotate(0) scale(1)" style="color:#3f8d3a" /><use href="#twig" transform="translate(519,349) rotate(52) scale(.75,.8)" style="color:#2f8279" /><use href="#palmTRd" transform="translate(551.5,319) rotate(0) scale(1)" style="color:#4f9a46" /><use href="#palmTR" transform="translate(551.5,319) rotate(0) scale(1)" style="color:#93c14e" /><use href="#twig" transform="translate(383,392) rotate(38) scale(.85,.9)" style="color:#2f8279" /><use href="#tuft" transform="translate(411,415.5) rotate(0) scale(1.150,1.050)" style="color:#a9d04f" /><use href="#frond" transform="translate(525,417) rotate(-6) scale(.9,.95)" style="color:#8fbe4c" /></g><g clip-path="url(#tc2)"><use href="#frond" transform="translate(436,472) rotate(18) scale(.42,.5)" style="color:#8cc26d" opacity=".85"/><use href="#frond" transform="translate(440,476) rotate(150) scale(.4,.55)" style="color:#a4cf7c" opacity=".8"/><ellipse cx="458" cy="469" rx="7" ry="2.200" fill="#2f8279" transform="rotate(-18 458 469)"/><ellipse cx="451" cy="474" rx="5" ry="1.800" fill="#2f8279" transform="rotate(14 451 474)"/><ellipse cx="445" cy="476.500" rx="4" ry="1.600" fill="#2f7a60" transform="rotate(20 445 476.500)"/><ellipse cx="447" cy="468.500" rx="5" ry="2.200" fill="#e9a27e" transform="rotate(-30 447 468.500)"/><circle cx="421.500" cy="480" r="18" fill="#fff" stroke="#86a662" stroke-width=".9"/></g><g clip-path="url(#tc3)"><use href="#frond" transform="translate(387,578) rotate(8) scale(.7,.75)" style="color:#d3e2a3" /><use href="#palmTL" transform="translate(382,542.5) rotate(0) scale(1)" style="color:#3f8d3a" /><use href="#tuft" transform="translate(543,640) rotate(0) scale(-1,2)" style="color:#b9d9dc" /><use href="#twig" transform="translate(553,622) rotate(-32) scale(.85,.95)" style="color:#2f8279" /><use href="#tuft" transform="translate(520,639) rotate(0) scale(1.100,1.050)" style="color:#a9d04f" /><circle cx="467" cy="575" r="14.300" fill="none" stroke="#a9c585" stroke-width=".7"/><circle cx="467" cy="575" r="12.800" fill="#9dbb72"/></g><rect x="462" y="605.500" width="9" height="1.300" fill="#9aa574"/><g clip-path="url(#c6a)"><use href="#leafphoto" transform="translate(391,793) scale(.61,.555)"/></g><g clip-path="url(#c6b)"><use href="#leafphoto" transform="translate(458,778) scale(.85,.705)"/></g><g clip-path="url(#tc5)"><circle cx="499.500" cy="922" r="32.500" fill="#cfe5b4" opacity=".8"/><circle cx="498" cy="922.500" r="31.500" fill="#c2ddaa" opacity=".7"/><g clip-path="url(#c7)"><use href="#leafphoto" transform="translate(466,890) scale(.66)"/></g></g></svg><div class="t " style="left:391.5px;top:235.75px;font-size:10.5px;color:#111;font-weight:900;letter-spacing:.1px">减塑限塑，共建绿色、</div><div class="t " style="left:391.5px;top:247.75px;font-size:10.5px;color:#111;font-weight:900;letter-spacing:.6px">环保、健康美丽家园</div><div class="t " style="left:393px;top:265.4px;font-size:3.2px;color:#9a8a78;font-weight:400;">25223</div><div class="t " style="left:393px;top:271.9px;font-size:3.2px;color:#9a8a78;font-weight:400;">团员与非团员</div><div class="t " style="left:393px;top:277.4px;font-size:3.2px;color:#9a8a78;font-weight:400;">2024.4.12</div><div class="t " style="left:469px;top:337.5px;font-size:8px;color:#5a5a5a;font-weight:300;transform:translateX(-50%);">2024</div><div class="t " style="left:466.5px;top:357px;font-size:11px;color:#4a4a4a;font-weight:300;transform:translateX(-50%);letter-spacing:1.300px">减塑限塑教育</div><div class="t " style="left:466.5px;top:372.2px;font-size:2.6px;color:#888;font-weight:400;transform:translateX(-50%);">综合教育</div><div class="t " style="left:466.5px;top:395px;font-size:3px;color:#777;font-weight:400;transform:translateX(-50%);">惟馨组</div><div class="t " style="left:421.5px;top:474.2px;font-size:5.6px;color:#555;font-weight:500;transform:translateX(-50%);letter-spacing:.5px">目录</div><div class="t " style="left:421.5px;top:484.2px;font-size:2.6px;color:#aaa;font-weight:400;transform:translateX(-50%);letter-spacing:.4px">CONTENTS</div><div class="t " style="left:475px;top:452.7px;font-size:4.2px;color:#9a9a9a;font-weight:300;">01</div><div class="t " style="left:487px;top:452.9px;font-size:3.8px;color:#555;font-weight:400;letter-spacing:.3px">目的原因</div><div class="t " style="left:475px;top:469.1px;font-size:4.2px;color:#9a9a9a;font-weight:300;">02</div><div class="t " style="left:487px;top:469.3px;font-size:3.8px;color:#555;font-weight:400;letter-spacing:.3px">目标</div><div class="t " style="left:475px;top:485.5px;font-size:4.2px;color:#9a9a9a;font-weight:300;">03</div><div class="t " style="left:487px;top:485.7px;font-size:3.8px;color:#555;font-weight:400;letter-spacing:.3px">危害与新塑料</div><div class="t " style="left:475px;top:501.9px;font-size:4.2px;color:#9a9a9a;font-weight:300;">04</div><div class="t " style="left:487px;top:502.1px;font-size:3.8px;color:#555;font-weight:400;letter-spacing:.3px">减塑方式</div><div class="t serif" style="left:467px;top:570.55px;font-size:9.5px;color:#f6f9ee;font-weight:400;transform:translateX(-50%);">01</div><div class="t " style="left:466.8px;top:595.1px;font-size:6.6px;color:#666;font-weight:400;transform:translateX(-50%);letter-spacing:.3px">目的原因</div><div class="t " style="left:391.5px;top:780.1px;font-size:6.4px;color:#333;font-weight:700;letter-spacing:.4px">塑料</div>
<!-- 40_canvas.py -->
<svg width="0" height="0" style="position:absolute"><defs><clipPath id="cpP"><circle cx="1384.500" cy="559" r="195.500"/></clipPath><clipPath id="cpQ"><path d="M1180 364.400 h420 v389 h-420z"/></clipPath><linearGradient id="gBack" x1="0" y1="0" x2="1" y2="1"><stop offset="0" stop-color="#d93a22"/><stop offset=".45" stop-color="#e4311f"/><stop offset="1" stop-color="#e83b22"/></linearGradient><linearGradient id="gDesk" x1="0" y1="0" x2="0" y2="1"><stop offset="0" stop-color="#e59a86"/><stop offset=".12" stop-color="#d65a43"/><stop offset=".35" stop-color="#cb3f2b"/><stop offset="1" stop-color="#c63524"/></linearGradient><linearGradient id="gSuit" x1="0" y1="0" x2="1" y2="0"><stop offset="0" stop-color="#222f5a"/><stop offset=".35" stop-color="#1a2347"/><stop offset="1" stop-color="#141a38"/></linearGradient><linearGradient id="gSkin" x1="0" y1="0" x2="1" y2="1"><stop offset="0" stop-color="#f0c4ab"/><stop offset="1" stop-color="#dba088"/></linearGradient><linearGradient id="gRing" x1="0" y1="1" x2="1" y2="0"><stop offset="0" stop-color="#cfe3c5"/><stop offset=".45" stop-color="#c8dfbd"/><stop offset=".7" stop-color="#c3dcb8"/><stop offset="1" stop-color="#c4dcb9"/></linearGradient><filter id="bl2" x="-20%" y="-20%" width="140%" height="140%"><feGaussianBlur stdDeviation="2.2"/></filter><filter id="bl5" x="-20%" y="-20%" width="140%" height="140%"><feGaussianBlur stdDeviation="6"/></filter><filter id="tsh" x="-10%" y="-10%" width="130%" height="130%"><feDropShadow dx="1.5" dy="2" stdDeviation="1.2" flood-color="#6a1208" flood-opacity=".75"/></filter><g id="spk"><circle cx="1365.500" cy="548.600" r="220" fill="#dcebd3"/><ellipse cx="1374" cy="554" rx="214" ry="213" fill="#d6e8cd"/><ellipse cx="1385" cy="555" rx="210" ry="210.300" fill="url(#gRing)"/><circle cx="1381" cy="563" r="199.500" fill="#bcd8b0"/><g clip-path="url(#cpQ)"><g clip-path="url(#cpP)"><rect x="1180" y="350" width="420" height="440" fill="url(#gBack)"/><g filter="url(#bl5)" opacity=".75"><path d="M1440 350 C1500 420 1540 500 1560 640" stroke="#f26a3c" stroke-width="22" fill="none"/><path d="M1500 350 C1550 430 1585 520 1590 620" stroke="#c9241a" stroke-width="20" fill="none"/><path d="M1230 420 C1270 400 1300 380 1340 350" stroke="#f0552f" stroke-width="22" fill="none"/><path d="M1190 500 C1215 470 1230 450 1260 420" stroke="#c9241a" stroke-width="18" fill="none"/><path d="M1470 480 C1510 520 1530 560 1545 610" stroke="#f47b4b" stroke-width="14" fill="none"/></g><path d="M1196 506 h40 v92 h-40z" fill="#cf7e33"/><path d="M1196 506 h40 v7 h-40z" fill="#e09a4a"/><rect x="1206" y="519" width="34" height="80" fill="#e0c4ae"/><rect x="1209" y="523" width="30" height="76" fill="#ead5c8"/><path d="M1322 400 C1290 412 1262 424 1240 438 C1228 470 1226 520 1232 560 C1236 580 1240 592 1246 602 L1530 602 C1528 580 1518 550 1507 531 C1500 505 1494 490 1489 485 C1485 470 1480 460 1475 453 C1462 436 1452 424 1442 415 C1430 402 1418 392 1404 386 L1366 452z" fill="url(#gSuit)"/><path d="M1246 602 C1244 560 1250 520 1262 480 C1276 520 1290 560 1300 602z" fill="#263463" opacity=".8"/><path d="M1442 415 C1462 436 1480 460 1489 485 C1500 505 1518 550 1530 602 L1480 602 C1480 540 1470 470 1442 415z" fill="#111733" opacity=".6"/><path d="M1322 398 L1366 452 L1340 470 L1310 420z" fill="#151c3d"/><path d="M1404 386 L1366 452 L1398 468 L1424 404z" fill="#121836"/><path d="M1366 452 v150" stroke="#0d1230" stroke-width="2.500"/><rect x="1363" y="462" width="5" height="8" rx="1" fill="#30365a"/><path d="M1322 340 C1318 376 1322 408 1338 428 C1350 442 1372 446 1388 438 C1402 428 1408 406 1408 384 C1410 368 1410 352 1408 340z" fill="url(#gSkin)"/><path d="M1338 428 C1350 442 1372 446 1388 438 C1396 432 1400 424 1404 412 C1392 426 1372 432 1348 422z" fill="#c98c74" opacity=".7"/><ellipse cx="1371" cy="396" rx="14" ry="4" fill="#b5625a" opacity=".85"/><ellipse cx="1376" cy="372" rx="11" ry="5" fill="#e6ab93" opacity=".8"/><path d="M1331 414 L1364 458 L1352 446 L1338 434z" fill="#f4f4f6"/><path d="M1400 414 L1366 458 L1384 442 L1396 430z" fill="#f4f4f6"/><path d="M1338 428 C1350 442 1372 446 1388 438 L1366 458z" fill="#e9e9ee"/><path d="M1384 552 L1494 542 L1500 580 L1392 584z" fill="#f3f0ee"/><path d="M1390 560 L1470 550 L1476 576 L1396 582z" fill="#fff" opacity=".8"/><g filter="url(#bl2)"><path d="M1252 600 C1262 576 1290 566 1330 566 C1350 564 1372 566 1384 574 L1392 600z" fill="#e9b8a2"/><path d="M1436 586 C1460 574 1490 572 1520 580 L1526 600 L1436 600z" fill="#e3a892"/></g><rect x="1180" y="597" width="420" height="200" fill="url(#gDesk)"/><g filter="url(#bl2)"><rect x="1361" y="582" width="82" height="26" fill="#d24a38"/><rect x="1361" y="580" width="82" height="4" fill="#e88a78"/></g><path d="M1232 560 C1236 580 1240 592 1246 602 L1256 596 C1262 580 1280 572 1300 568 C1280 540 1250 520 1232 560z" fill="#1c2650" opacity=".9"/><g filter="url(#bl5)"><ellipse cx="1350" cy="594" rx="120" ry="9" fill="#f1cfc4" opacity=".75"/><ellipse cx="1480" cy="596" rx="60" ry="7" fill="#efc6ba" opacity=".6"/></g><g><path d="M1436 498 L1456 590" stroke="#3c3f4a" stroke-width="4"/><path d="M1477 500 L1495 592" stroke="#3c3f4a" stroke-width="4"/><ellipse cx="1431" cy="493" rx="10" ry="12" fill="#1b1d28" transform="rotate(-25 1431 493)"/><ellipse cx="1471" cy="494" rx="10" ry="12" fill="#1b1d28" transform="rotate(-25 1471 494)"/><rect x="1434" y="494" width="10" height="8" rx="2" fill="#6a6d78" transform="rotate(12 1439 498)"/><rect x="1474" y="496" width="10" height="8" rx="2" fill="#6a6d78" transform="rotate(12 1479 500)"/></g><g filter="url(#tsh)" fill="#fff" font-family="Liberation Serif, Noto Serif CJK SC, serif" font-weight="900" font-size="50"><text x="1216" y="690" font-size="56">“</text><g transform="translate(0,693.500) scale(1,1.055) translate(0,-693.500)"><text x="1253" y="693.500">环境</text></g><g transform="translate(0,761.500) scale(1,1.055) translate(0,-761.500)"><text x="1254" y="761.500" letter-spacing="1.500">就是民生</text></g><text x="1466" y="760" font-size="56">”</text></g></g></g></g></defs></svg><div class="a" style="left:584px;top:150px;width:1160px;height:825px;background:linear-gradient(180deg,rgba(233,229,230,0) 0%,rgba(233,229,230,0) 55%,rgba(233,229,230,.9) 100%),linear-gradient(90deg,#e5e3e6 0%,#e4e4e5 50%,#e3e3e3 100%);"></div><div class="a" style="left:352px;top:149.5px;width:1697px;height:3px;background:linear-gradient(180deg,#c6c6c9,#dcdcde);border-radius:0 0 3px 3px"></div><div class="a" style="left:599px;top:249px;width:1113px;height:627px;background:#fff;border:1px solid #c9c8ca;box-shadow:0 1px 2px rgba(0,0,0,.12)"></div><svg class="L" viewBox="0 0 2400 1080"><use href="#spk"/></svg><div class="a serif" style="left:709px;top:346.800px;font-size:19.700px;line-height:30.100px;letter-spacing:2.400px;color:#c5303c;white-space:nowrap;font-weight:500">习近平生态文明思想要求努力实现<br>人与自然和谐共生。人与自然是生<br>命共同体，生态兴衰关系文明兴衰，<br>如何实现人与自然和谐共生是人类<br>文明发展的基本问题。</div><div class="a serif" style="left:708.500px;top:591.200px;font-size:19.700px;line-height:24.900px;letter-spacing:1.170px;color:#1f1f1f;white-space:nowrap;font-weight:500"><span style="color:#c5303c">全世界每年以亿吨为单位产出的塑料<br>垃圾，正使地球陷入巨大的塑料污染<br>危机。</span>从世界最高峰珠穆朗玛峰的山<br>巅，到地球海拔最低的马里亚纳海沟，<br>甚至在人迹罕至的南极海域，<span style="color:#c5303c">都发现<br>了塑料垃圾的踪迹。</span></div><svg class="L" viewBox="0 0 2400 1080"><path d="M976 355.500 h6 M979 355.500 v17.500 M976 373 h6" stroke="#111" stroke-width="1.300" fill="none"/><path d="M1735.300 157 l3 4 h-6z M1735.300 932 l3 -4 h-6z" fill="#777"/><path d="M1735.300 941 l2.800 3 h-5.600z M1735.300 944 l2.800 3 h-5.600z M1735.300 961 l2.800 -3 h-5.600z M1735.300 964 l2.800 -3 h-5.600z" fill="#666"/><rect x="1731.500" y="383" width="7" height="53" rx="3.500" fill="#cdcdce"/></svg>
<!-- 45_thumb5.py -->
<svg class="L" viewBox="0 0 2400 1080"><g transform="translate(382,652.800) scale(0.1524) translate(-599.500,-249.500)"><use href="#spk"/></g></svg><div class="a serif" style="left:382px;top:652.800px;width:1112px;height:626px;transform:scale(0.1524);transform-origin:0 0;pointer-events:none"><div class="a" style="left:110px;top:98px;font-size:19.700px;line-height:30.100px;letter-spacing:2.400px;color:#e58d9b;white-space:nowrap;font-weight:500">习近平生态文明思想要求努力实现<br>人与自然和谐共生。人与自然是生<br>命共同体，生态兴衰关系文明兴衰，<br>如何实现人与自然和谐共生是人类<br>文明发展的基本问题。</div><div class="a" style="left:109.500px;top:341px;font-size:19.700px;line-height:24.900px;letter-spacing:1.170px;color:#555;white-space:nowrap;font-weight:500"><span style="color:#e58d9b">全世界每年以亿吨为单位产出的塑料<br>垃圾，正使地球陷入巨大的塑料污染<br>危机。</span>从世界最高峰珠穆朗玛峰的山<br>巅，到地球海拔最低的马里亚纳海沟，<br>甚至在人迹罕至的南极海域，<span style="color:#e58d9b">都发现<br>了塑料垃圾的踪迹。</span></div></div><div class="a serif" style="left:398.800px;top:885.200px;font-size:3.350px;line-height:5.100px;letter-spacing:.1px;color:#e58d9b;white-space:nowrap;width:52px">限塑是什么意思是指，国家为保<br>护环境而对部分塑料制品进行生<br>产销售和使用的限制，<span style="color:#555">其目的是</span><br><span style="color:#555">节能减排，为了环境保护之</span><br><span style="color:#555">本，</span>减少使用塑料袋，倡导自<br>备购物袋，重复使用环保购物<br>袋等。</div><div class="a serif" style="left:398.800px;top:927.200px;font-size:3.350px;line-height:4.180px;letter-spacing:.1px;color:#555;white-space:nowrap;width:52px;height:32px;overflow:hidden"><span style="color:#e58d9b">减塑不仅要从源头做起，</span>同时要<br>加大废弃塑料的回收利用力度，<br>少用、不用一次性塑料制品，<br>推广应用替代产品，培养绿色<br>消费理念，养成减塑的良好习<br>惯。<span style="color:#e58d9b">让我们从现在做起从点滴</span><br><span style="color:#e58d9b">做起，</span>减少塑料污染，共建绿色<br>环保美丽家园，守护我们共同</div>
<!-- 50_right.py -->
<div class="a" style="left:1744px;top:152.5px;width:262.5px;height:854px;background:#e4e4e3;"></div><div class="a" style="left:1743.5px;top:152.5px;width:1px;height:854px;background:#cfcfcd;"></div><div class="a" style="left:2006.5px;top:152.5px;width:1px;height:854px;background:#d2d2d2;"></div><div class="a" style="left:2007.5px;top:152.5px;width:56.5px;height:854px;background:#e5e5e5;"></div><div class="t " style="left:1763.5px;top:168.3px;font-size:14px;color:#222;font-weight:400;">对象属性</div><div class="t " style="left:1762px;top:207.45px;font-size:12.3px;color:#c4571f;font-weight:700;">填充</div><div class="a" style="left:1761.5px;top:225.5px;width:24px;height:2px;background:#d9602a;border-radius:1px"></div><div class="t " style="left:1773px;top:246.85px;font-size:12.3px;color:#222;font-weight:700;">填充</div><div class="a" style="left:1860px;top:241px;width:130.5px;height:23px;background:#fff;border-radius:4px;box-shadow:0 0 2px rgba(0,0,0,.25)"></div><div class="a" style="left:1860px;top:445px;width:130px;height:23px;background:#fff;border-radius:4px;box-shadow:0 0 2px rgba(0,0,0,.25)"></div><div class="a" style="left:1905px;top:477.5px;width:85px;height:23px;background:#fff;border-radius:4px;box-shadow:0 0 2px rgba(0,0,0,.25)"></div><div class="t " style="left:1796.5px;top:288.5px;font-size:12px;color:#2b2b2b;font-weight:400;letter-spacing:-.35px">纯色填充(S)</div><div class="t " style="left:1796.5px;top:321px;font-size:12px;color:#2b2b2b;font-weight:400;letter-spacing:-.35px">渐变填充(G)</div><div class="t " style="left:1796.5px;top:353px;font-size:12px;color:#2b2b2b;font-weight:400;letter-spacing:-.35px">图片或纹理填充(P)</div><div class="t " style="left:1796.5px;top:385.5px;font-size:12px;color:#2b2b2b;font-weight:400;letter-spacing:-.35px">图案填充(A)</div><div class="t " style="left:1796.5px;top:418px;font-size:12px;color:#2b2b2b;font-weight:400;letter-spacing:-.35px">隐藏背景图形(H)</div><div class="t " style="left:1772px;top:450.5px;font-size:12px;color:#2b2b2b;font-weight:400;letter-spacing:-.3px">颜色(C)</div><div class="t " style="left:1772px;top:483px;font-size:12px;color:#2b2b2b;font-weight:400;letter-spacing:-.4px">透明度(T)</div><div class="t " style="left:1913px;top:482.75px;font-size:12.5px;color:#333;font-weight:400;">0</div><div class="t " style="left:1959.5px;top:482.75px;font-size:12.5px;color:#333;font-weight:400;">%</div><div class="a" style="left:1760.5px;top:971.5px;width:59px;height:22.5px;background:#fff;border-radius:4px;box-shadow:0 0 2px rgba(0,0,0,.25)"></div><div class="t " style="left:1790px;top:977px;font-size:12px;color:#222;font-weight:400;transform:translateX(-50%);letter-spacing:-.3px">全部应用</div><div class="a" style="left:1830px;top:971.5px;width:59px;height:22.5px;background:#ececec;border-radius:4px;border:1px solid #dcdcdc"></div><div class="t " style="left:1859.5px;top:977px;font-size:12px;color:#b5b5b5;font-weight:400;transform:translateX(-50%);letter-spacing:-.3px">重置背景</div><div class="a" style="left:2020px;top:192px;width:32px;height:31px;background:#dcdbdb;border-radius:6px"></div><svg class="L" viewBox="0 0 2400 1080"><path class="ic" style="stroke-width:1.3" d="M1828.7 174.35 l2.3 2.3 l2.3 -2.3"/><path class="ic" d="M1949.500 169.500 l5.500 5.500 l-2.500 .8 l-2 3.200 l-2.500 .5 l-4.500 -4.500 l.5 -2.500 l3.200 -2z M1946 178.500 l-3 3"/><path class="ic" d="M1974 170.500 l9 9 M1983 170.500 l-9 9"/><path d="M1763.500 250.500 h6 l-3 4.500z" fill="#666"/><path class="ig" stroke="#8a8a8a" style="stroke-width:1.3" d="M1974.6 250.8 l3.4 3.4 l3.4 -3.4"/><path class="ig" style="stroke-width:1.3" d="M1974.6 454.8 l3.4 3.4 l3.4 -3.4"/><circle cx="1784.500" cy="294.500" r="6" fill="#fff" stroke="#3a6fd8" stroke-width="1.200"/><circle cx="1784.500" cy="294.500" r="3.200" fill="#3a6fd8"/><circle cx="1784.500" cy="327" r="6" fill="#f6f6f6" stroke="#777" stroke-width="1"/><circle cx="1784.500" cy="359" r="6" fill="#f6f6f6" stroke="#777" stroke-width="1"/><circle cx="1784.500" cy="391.5" r="6" fill="#f6f6f6" stroke="#777" stroke-width="1"/><rect x="1778.500" y="418" width="12" height="12" rx="2" fill="#fafafa" stroke="#666" stroke-width="1"/><path d="M1845 488.500 h55" stroke="#bdbdbd" stroke-width="1.500"/><circle cx="1840" cy="488.500" r="5.200" fill="#fff" stroke="#cfcfcf" stroke-width="1"/><circle cx="1840" cy="488.500" r="2.800" fill="#7a7a7a"/><path class="ic" style="stroke-width:1.3" d="M1980.6 486.200 l2.4 -2.4 l2.4 2.4"/><path class="ic" style="stroke-width:1.3" d="M1980.6 492.3 l2.4 2.4 l2.4 -2.4"/><path class="ic" d="M2029 174.500 h13" style="stroke:#909090;stroke-width:2"/><path class="ic" d="M2028 203.500 h4 M2037 203.500 h7 M2028 212 h8 M2041 212 h3"/><circle class="ic" cx="2034.500" cy="203.500" r="2.300"/><circle class="ic" cx="2038.500" cy="212" r="2.300"/><path class="ic" d="M2036.500 241 l2 4.300 l4.700 .6 l-3.500 3.200 l.9 4.600 l-4.100 -2.300 l-4.100 2.300 l.9 -4.600 M2029 247.500 h4 M2028.500 250.500 h3 M2029.500 253.500 h2.500"/><path class="ic" d="M2033 290.500 h-4 v-8.500 h10 v3 M2033 285.500 h10 v9 h-10z M2030 293.500 l2 2 M2030 293.500 l2 -2" /><path class="ic" d="M2029 334 v-8.500 l3.500 -2.500 h2 a1.800 1.800 0 0 0 3.600 0 h2 l3.500 2.500 l-1.500 3 l-2 -1 M2029 334 h5 M2036 334 c0 -3 1.500 -5 4.500 -5.500 c.3 3 -1 5 -4.500 5.500 M2036 334 l3 -3.500"/><path class="ic" d="M2030.500 373 l8.500 -8.500 l2.500 2.500 l-8.500 8.500z M2036.500 367 l2.500 2.500 M2031 362 l.9 2 l2 .9 l-2 .9 l-.9 2 l-.9 -2 l-2 -.9 l2 -.9z M2041.500 371 l.7 1.500 l1.500 .7 l-1.500 .7 l-.7 1.500 l-.7 -1.500 l-1.500 -.7 l1.500 -.7z" style="stroke-width:1"/><path class="ic" d="M2036 405 c-2 -1.500 -4.500 -1.800 -7 -1.200 v11 c2.500 -.6 4 -.4 5.500 .5 M2036 405 c2 -1.500 4.500 -1.800 7 -1.200 v6 M2036 405 v5"/><circle class="ic" cx="2039.500" cy="413" r="2.600"/><path class="ic" d="M2041.500 415 l2 2"/><circle class="ic" cx="2035.500" cy="450.500" r="7"/><path class="ic" d="M2033.300 448.800 a2.300 2.300 0 1 1 3.400 2 c-.8 .5 -1.200 1 -1.200 2"/><circle cx="2035.500" cy="455" r=".8" fill="#3c3c3c"/><path class="ic" d="M2033 484.500 l-4.500 2.500 l1.500 3.500 l2 -1 v8 h4 M2033 484.500 a2.500 2.500 0 0 0 5 0 l4.500 2.500 l-1.500 3.500 l-2 -1 v2 M2038 494 l1.500 1.500 M2042 494 l-1.500 1.500 M2038 498 l1.500 -1.500 M2042 498 l-1.500 -1.500"/><circle cx="2030" cy="530.500" r="1.700" fill="none" stroke="#3c3c3c" stroke-width="1"/><circle cx="2035.5" cy="530.500" r="1.700" fill="none" stroke="#3c3c3c" stroke-width="1"/><circle cx="2041" cy="530.500" r="1.700" fill="none" stroke="#3c3c3c" stroke-width="1"/></svg>
<!-- 60_status.py -->
<div class="a" style="left:584px;top:974.5px;width:1160px;height:33px;background:#e9e5e5;"></div><div class="a" style="left:584px;top:974px;width:1160px;height:1px;background:#cfcdcd;"></div><div class="t " style="left:592.5px;top:981.35px;font-size:13.3px;color:#8c8c8c;font-weight:400;">单击此处添加备注</div><div class="a" style="left:336px;top:1007px;width:1728px;height:25px;background:linear-gradient(90deg,#e9e6e6 0%,#e8e6e6 60%,#e6e6e5 100%);"></div><div class="a" style="left:336px;top:1007px;width:1728px;height:1px;background:#cdcbcb;"></div><div class="a" style="left:336px;top:1031px;width:1728px;height:2px;background:#bcbcbc;"></div><div class="t " style="left:350px;top:1013.5px;font-size:12px;color:#333;font-weight:400;">幻灯片 5 / 11</div><div class="t " style="left:467.5px;top:1013.35px;font-size:12.3px;color:#333;font-weight:400;">Office 主题</div><div class="t " style="left:1379px;top:1013.4px;font-size:12.2px;color:#333;font-weight:400;">智能美化</div><div class="t " style="left:1488px;top:1013.4px;font-size:12.2px;color:#333;font-weight:400;">备注</div><div class="t " style="left:1564.5px;top:1013.4px;font-size:12.2px;color:#333;font-weight:400;">批注</div><div class="a" style="left:1612.5px;top:1008.5px;width:22.5px;height:22px;background:#dddcdc;border-radius:3px"></div><div class="a" style="left:1719.5px;top:1010px;width:21px;height:18.5px;background:#e0682a;border-radius:3px"></div><div class="t " style="left:1820.5px;top:1013.2px;font-size:12.6px;color:#333;font-weight:400;">85%</div><svg class="L" viewBox="0 0 2400 1080"><path class="ic" d="M451.500 1013.500 l-3.500 2 l1.300 3 l1.700 -.8 v7 h4 M451.500 1013.500 a2.300 2.300 0 0 0 4.600 0 l3.500 2 l-1.300 3 l-1.700 -.8 v1.500 M456 1022 l1.300 1.300 M460 1022 l-1.300 1.300 M456 1026 l1.300 -1.300 M460 1026 l-1.300 -1.300" style="stroke-width:1.100"/><path class="ic" d="M1360.500 1016 l5 -2.500 l5 2.500 M1360.500 1016 v6.500 a5 3 0 0 0 10 0 v-3 M1360.500 1016 c1.500 2 8.500 2 10 0"/><path class="ic" style="stroke-width:1.3" d="M1433.2 1018.35 l2.3 2.3 l2.3 -2.3"/><path class="ic" style="stroke-width:1.3" d="M1518.2 1018.35 l2.3 2.3 l2.3 -2.3"/><path class="ic" style="stroke-width:1.3" d="M1749.7 1018.35 l2.3 2.3 l2.3 -2.3"/><path class="ic" style="stroke-width:1.3" d="M1861.7 1018.35 l2.3 2.3 l2.3 -2.3"/><path d="M1454 1012 v15" stroke="#d4d3d3" stroke-width="1"/><path d="M1603 1012 v15" stroke="#d4d3d3" stroke-width="1"/><path d="M1709.5 1012 v15" stroke="#d4d3d3" stroke-width="1"/><path d="M1767 1012 v15" stroke="#d4d3d3" stroke-width="1"/><path class="ic" d="M1470 1015 h2 M1475 1014 l1.500 1.500 l1.500 -1.500 M1470 1019.500 h11 M1470 1024 h11"/><path class="ic" d="M1554.500 1023.500 h-8.500 v-10 h12.500 v5 M1547.500 1023.500 v3 l3 -3 M1555.500 1023 h4.500 M1557.750 1020.750 v4.500"/><rect class="ic" x="1617.500" y="1014" width="13" height="11" rx="1"/><path class="ic" d="M1621.500 1014 v11"/><rect class="ic" x="1650.500" y="1013.500" width="4.500" height="4.500" rx=".8"/><rect class="ic" x="1657.500" y="1013.500" width="4.500" height="4.500" rx=".8"/><rect class="ic" x="1650.500" y="1021" width="4.500" height="4.500" rx=".8"/><rect class="ic" x="1657.500" y="1021" width="4.500" height="4.500" rx=".8"/><path class="ic" d="M1689 1015.500 c-2 -1.500 -4 -1.800 -6 -1.200 v10 c2 -.6 4 -.3 6 1.200 c2 -1.500 4 -1.800 6 -1.200 v-10 c-2 -.6 -4 -.3 -6 1.200z M1689 1015.500 v10"/><path d="M1727.500 1015 l6.500 4.300 l-6.500 4.300z" fill="#fff"/><path class="ic" d="M1783.500 1017 v-3 h3 M1791.500 1014 h3 v3 M1794.500 1022 v3 h-3 M1786.500 1025 h-3 v-3"/><rect class="ic" x="1786.300" y="1016.800" width="5.400" height="5.400" rx="1"/><path d="M1886.500 1019.500 h11" stroke="#222" stroke-width="1.800"/><path d="M2034.500 1019.500 h10 M2039.500 1014.500 v10" stroke="#222" stroke-width="1.800"/><path d="M1912 1019 h44" stroke="#3c6fd0" stroke-width="1.600"/><path d="M1956 1019 h63" stroke="#c6c6c6" stroke-width="1.200"/><circle cx="1956.300" cy="1018.500" r="4.600" fill="#fff" stroke="#d0d0d0" stroke-width=".8"/><circle cx="1956.300" cy="1018.500" r="2.300" fill="#8a8a8a"/></svg>
<!-- 70_taskbar.py -->
<div class="a" style="left:336px;top:1033px;width:1728px;height:47px;background:#dcdcdc;"></div><div class="a" style="left:912px;top:1041px;width:220px;height:30px;background:#f6f6f6;border-radius:15px;box-shadow:0 0 1.500px rgba(0,0,0,.3)"></div><div class="t " style="left:949px;top:1048.5px;font-size:14px;color:#5a5a5a;font-weight:400;">搜索</div><div class="a" style="left:1496px;top:1037px;width:38px;height:43px;background:#ebebeb;border-radius:4px"></div><div class="t " style="left:388px;top:1041.75px;font-size:11.5px;color:#333;font-weight:400;letter-spacing:-.3px">18°C</div><div class="t " style="left:388px;top:1058.5px;font-size:12px;color:#444;font-weight:400;">大部晴朗</div><div class="t " style="left:1849px;top:1048.25px;font-size:15.5px;color:#222;font-weight:400;">英</div><div class="t" style="right:381px;top:1041.35px;font-size:12.300px;color:#222">20:36</div><div class="t" style="right:381px;top:1057.65px;font-size:12.300px;color:#222">2024/4/12</div><svg class="L" viewBox="0 0 2400 1080"><defs><linearGradient id="gWin" gradientUnits="userSpaceOnUse" x1="875" y1="1045" x2="898" y2="1068"><stop offset="0" stop-color="#5cc0f2"/><stop offset="1" stop-color="#2a86dc"/></linearGradient><linearGradient id="gEdge" x1="0" y1="0" x2="1" y2="1"><stop offset="0" stop-color="#35c1f1"/><stop offset=".5" stop-color="#1b7fd6"/><stop offset="1" stop-color="#2bc48a"/></linearGradient><linearGradient id="gFx" x1="0" y1="0" x2="0" y2="1"><stop offset="0" stop-color="#ffbd2e"/><stop offset=".6" stop-color="#ff6a2a"/><stop offset="1" stop-color="#e3244e"/></linearGradient><linearGradient id="gCop" x1="0" y1="0" x2="1" y2="1"><stop offset="0" stop-color="#2a8fe8"/><stop offset=".5" stop-color="#b05ad8"/><stop offset="1" stop-color="#f5a43a"/></linearGradient></defs><circle cx="366" cy="1052" r="8" fill="#c9cde8" opacity=".8"/><path d="M358 1058 c2 7 14 9 19 -2 c-5 4 -13 5 -19 2z" fill="#f39a2d"/><circle cx="375" cy="1046" r="6" fill="#c9281f"/><text x="375" y="1049.500" font-size="9" fill="#fff" text-anchor="middle" font-family="Liberation Sans, sans-serif">1</text><rect x="875.5" y="1045" width="10.500" height="10.500" rx=".8" fill="url(#gWin)"/><rect x="887" y="1045" width="10.500" height="10.500" rx=".8" fill="url(#gWin)"/><rect x="875.5" y="1056.5" width="10.500" height="10.500" rx=".8" fill="url(#gWin)"/><rect x="887" y="1056.5" width="10.500" height="10.500" rx=".8" fill="url(#gWin)"/><circle cx="929.500" cy="1054.500" r="5" fill="none" stroke="#222" stroke-width="1.600"/><path d="M933.200 1058.200 l4 4" stroke="#222" stroke-width="1.800" stroke-linecap="round"/><path d="M1150 1046 c2 -4 8 -4 11 -2 c4 -2 9 1 8 6 c1 5 -3 9 -7 9 c-3 3 -9 3 -11 -1 c-4 -2 -4 -9 -1 -12z" fill="url(#gCop)"/><path d="M1156 1050 c2 -1 5 0 5 3 c-1 2 -4 2 -6 1z" fill="#fff" opacity=".8"/><rect x="1151" y="1059" width="16" height="8" rx="2" fill="#f3c52a"/><text x="1159" y="1065.600" font-size="6.500" font-weight="700" fill="#222" text-anchor="middle" font-family="Liberation Sans, sans-serif">PRE</text><rect x="1197" y="1045" width="16" height="14" rx="1.500" fill="#f4f4f4" stroke="#d0d0d0" stroke-width=".6"/><rect x="1191.500" y="1050.500" width="16" height="14" rx="1.500" fill="#2a2a2a"/><path d="M1241 1044.500 a5.500 5 0 0 1 11 0" fill="none" stroke="#1f5fa8" stroke-width="1.600"/><rect x="1235" y="1046.500" width="23" height="19" rx="3" fill="#1f64b8"/><rect x="1241.500" y="1051" width="4.500" height="4.500" fill="#f25022"/><rect x="1247" y="1051" width="4.500" height="4.500" fill="#7fba00"/><rect x="1241.500" y="1056.500" width="4.500" height="4.500" fill="#00a4ef"/><rect x="1247" y="1056.500" width="4.500" height="4.500" fill="#ffb900"/><circle cx="1291" cy="1055" r="11.500" fill="url(#gEdge)"/><path d="M1283 1056 c0 -6 10 -8 13 -2 c1 3 -2 5 -5 4 c1 -3 -3 -5 -5 -1 c-1 3 1 7 6 8 c-6 1 -9 -4 -9 -9z" fill="#fff" opacity=".85"/><path d="M1336 1043 c4 2 8 2.500 11 2.500 c.5 10 -3 17 -11 21 c-8 -4 -11.500 -11 -11 -21 c3 0 7 -.5 11 -2.500z" fill="#1f6fd6"/><path d="M1333 1048 h3.500 v9.500 h5.500 v3.500 h-9z" fill="#fff"/><path d="M1369.500 1046 h8 l2.500 2.500 h12.500 v16.500 h-23z" fill="#f6c343"/><rect x="1369.500" y="1050.500" width="23" height="14.500" rx="1" fill="#fbd35a"/><rect x="1374.500" y="1059.500" width="13" height="5.500" rx="1" fill="#2f82d8"/><circle cx="1425" cy="1055.500" r="11.500" fill="url(#gFx)"/><circle cx="1426.500" cy="1054.500" r="5.500" fill="#7a3fd0"/><path d="M1415 1050 c3 -5 9 -6 13 -4 c-3 0 -5 2 -5 4 c3 0 4 2 3 4 c-3 1 -6 -1 -7 -3 c-2 2 -1 6 2 8 c-4 0 -7 -4 -6 -9z" fill="#ff9a1f"/><rect x="1458.500" y="1044" width="23" height="23" rx="5" fill="#2a7df0"/><path d="M1462.500 1060 l4.500 -7 l3.500 4.500 l3.500 -5.500 l4 8z" fill="#fff"/><path d="M1501.500 1048.500 h6.500 l2 9 l2.600 -7.500 h4 l2.600 7.500 l2 -9 h6.500 l-4.700 17 h-6 l-2.400 -7 l-2.400 7 h-6z" fill="#e23b2e"/><path d="M1517.500 1051 l3 7.500 l-1.200 3.500 l-3.300 -9z" fill="#fff" opacity=".55"/><rect x="1508.500" y="1073.500" width="11.500" height="3" rx="1.500" fill="#2f7fe0"/><rect x="1288" y="1073" width="6" height="2.500" rx="1.200" fill="#8e8e8e"/><rect x="1378" y="1073" width="6" height="2.500" rx="1.200" fill="#8e8e8e"/><rect x="1467" y="1073" width="6" height="2.500" rx="1.200" fill="#8e8e8e"/><path class="ic" d="M1788.500 1058.500 l5 -5 l5 5" style="stroke-width:1.500;stroke:#222"/><rect x="1821.500" y="1047" width="7" height="12" rx="3.500" fill="none" stroke="#2f6fd0" stroke-width="1.500"/><path d="M1818.500 1055.500 a6.500 6.500 0 0 0 13 0 M1825 1062 v3" fill="none" stroke="#2f6fd0" stroke-width="1.500" stroke-linecap="round"/><path d="M1882 1052.500 a12 12 0 0 1 17 0 M1884.800 1055.700 a8 8 0 0 1 11.400 0 M1887.600 1058.800 a4 4 0 0 1 5.800 0" fill="none" stroke="#222" stroke-width="1.500" stroke-linecap="round"/><circle cx="1890.500" cy="1062" r="1.300" fill="#222"/><path d="M1906 1053.500 h3 l4 -3.500 v12 l-4 -3.500 h-3z" fill="none" stroke="#222" stroke-width="1.300" stroke-linejoin="round"/><path d="M1915.500 1053 a4.500 4.500 0 0 1 0 6" fill="none" stroke="#222" stroke-width="1.200" stroke-linecap="round"/><path d="M1918 1050.500 a8 8 0 0 1 0 11" fill="none" stroke="#aaa" stroke-width="1.200" stroke-linecap="round"/><rect x="1932" y="1051" width="15" height="9.500" rx="2" fill="none" stroke="#222" stroke-width="1.300"/><rect x="1934" y="1053" width="11" height="5.500" rx="1" fill="#222"/><path d="M1948.500 1054 v3.500" stroke="#222" stroke-width="1.500" stroke-linecap="round"/><path d="M1931 1050 l4 -4 v3 h3" fill="none" stroke="#222" stroke-width="1.300"/><path d="M2030 1062 c1.500 -1.500 2 -3 2 -6 a4.500 4.500 0 0 1 3 -4.500 M2030 1062 h12 c-1 -1 -1.600 -2 -1.800 -3.500 M2034.500 1064 a1.800 1.800 0 0 0 3.400 0" fill="none" stroke="#222" stroke-width="1.200" stroke-linecap="round"/><text x="2037" y="1056" font-size="7" font-weight="700" fill="#222" font-family="Liberation Sans, sans-serif">z</text><text x="2040.500" y="1051.500" font-size="6" font-weight="700" fill="#222" font-family="Liberation Sans, sans-serif">z</text></svg>
<!-- 80_overlay.py -->
<div class="a" style="left:1834px;top:724px;width:218.5px;height:35.5px;background:#f6f6f6;border-radius:5px;border:1px solid #b4b4b4;box-shadow:0 10px 26px 6px rgba(0,0,0,.17),0 0 6px rgba(0,0,0,.12)"></div><div class="a" style="left:1844px;top:734px;width:3.3px;height:15.8px;background:#8c8c8c;border-radius:1px"></div><div class="a" style="left:1858px;top:725px;width:1px;height:33.5px;background:#c4c4c4;"></div><div class="t " style="left:1874.5px;top:732.3px;font-size:20px;color:#1a1a1a;font-weight:400;transform:translateX(-50%);">英</div><div class="t " style="left:1971.5px;top:732.3px;font-size:20px;color:#1a1a1a;font-weight:400;transform:translateX(-50%);">简</div><svg class="L" viewBox="0 0 2400 1080"><path d="M1905.500 733 a9.300 9.300 0 1 1 -6 15.500 a9.500 9.500 0 0 0 6 -15.500z" fill="none" stroke="#1a1a1a" stroke-width="1.300" stroke-linejoin="round"/><circle cx="1934.600" cy="737.500" r="2.600" fill="#1a1a1a"/><path d="M1943.500 743 l-2 6" stroke="#1a1a1a" stroke-width="2.400" stroke-linecap="butt"/><circle cx="2004" cy="742" r="9.300" fill="none" stroke="#1a1a1a" stroke-width="1.300"/><circle cx="2000.700" cy="739.500" r="1.200" fill="#1a1a1a"/><circle cx="2007.300" cy="739.500" r="1.200" fill="#1a1a1a"/><path d="M1999.500 744.500 a5 5 0 0 0 9 0" fill="none" stroke="#1a1a1a" stroke-width="1.300" stroke-linecap="round"/><path d="M2035.58 732.76 L2037.62 732.76 L2038.21 735.19 L2040.27 736.04 L2042.41 734.74 L2043.86 736.19 L2042.56 738.33 L2043.41 740.39 L2045.84 740.98 L2045.84 743.02 L2043.41 743.61 L2042.56 745.67 L2043.86 747.81 L2042.41 749.26 L2040.27 747.96 L2038.21 748.81 L2037.62 751.24 L2035.58 751.24 L2034.99 748.81 L2032.93 747.96 L2030.79 749.26 L2029.34 747.81 L2030.64 745.67 L2029.79 743.61 L2027.36 743.02 L2027.36 740.98 L2029.79 740.39 L2030.64 738.33 L2029.34 736.19 L2030.79 734.74 L2032.93 736.04 L2034.99 735.19z" fill="none" stroke="#1a1a1a" stroke-width="1.300" stroke-linejoin="round"/><circle cx="2036.600" cy="742" r="3.300" fill="none" stroke="#1a1a1a" stroke-width="1.300"/><circle cx="1136.700" cy="1025.800" r="8.700" fill="#fff"/><circle cx="1178.3" cy="1025.800" r="8" fill="#fff" opacity=".28"/><circle cx="1220" cy="1025.800" r="8" fill="#fff" opacity=".28"/><circle cx="1263.3" cy="1025.800" r="8" fill="#fff" opacity=".28"/></svg><div class="a" style="left:0px;top:0px;width:336px;height:1080px;background:#000;"></div><div class="a" style="left:2064px;top:0px;width:336px;height:1080px;background:#000;"></div><div class="a" style="left:36px;top:978px;width:402px;height:72px;background:rgba(0,0,0,.56);"></div><div class="a" style="left:36px;top:978px;width:72px;height:72px;background:#f5832b;"></div><div class="t " style="left:175.5px;top:997.5px;font-size:36px;color:#fff;font-weight:400;letter-spacing:-.4px">惟馨的屏幕共享</div><div class="t " style="left:133.5px;top:119.25px;font-size:35.5px;color:#fff;font-weight:400;letter-spacing:-.2px">录制中</div><div class="a" style="left:2130.5px;top:346.5px;width:167px;height:60.5px;background:#2d2f37;border-radius:30px;overflow:hidden"></div><div class="a" style="left:2130.500px;top:346.500px;width:59.500px;height:60.500px;background:#f5832b;border-radius:30px 0 0 30px"></div><div class="t " style="left:2209px;top:359px;font-size:36px;color:#fff;font-weight:400;letter-spacing:-1px">惟馨</div><svg class="L" viewBox="0 0 2400 1080"><defs><clipPath id="avc"><circle cx="2214" cy="215" r="96"/></clipPath><filter id="bl3" x="-20%" y="-20%" width="140%" height="140%"><feGaussianBlur stdDeviation="2.5"/></filter><linearGradient id="gHair" x1="0" y1="0" x2="1" y2="1"><stop offset="0" stop-color="#4a3833"/><stop offset="1" stop-color="#2c201d"/></linearGradient><clipPath id="micL"><rect x="132" y="992.500" width="18.500" height="31" rx="9.250"/></clipPath><clipPath id="micB"><rect x="2205" y="286" width="18" height="27" rx="9"/></clipPath></defs><circle cx="84" cy="133.600" r="19.500" fill="none" stroke="#5e2b27" stroke-width="2.200"/><circle cx="84" cy="133.600" r="12.200" fill="#9c2f25"/><circle cx="72" cy="1002" r="9.200" fill="#fff6ea"/><path d="M51 1034.500 c0 -12 6 -17.500 14.500 -19.500 l6.500 5.500 l6.500 -5.500 c8.500 2 14.500 7.500 14.500 19.500z" fill="#fff6ea"/><g clip-path="url(#micL)"><rect x="132" y="992.500" width="18.500" height="31" fill="#fff"/><rect x="132" y="1006" width="18.500" height="18" fill="#6fe350"/></g><path d="M125.500 1014.500 a15.700 15.700 0 0 0 31.400 0" fill="none" stroke="#fff" stroke-width="5"/><path d="M141.200 1030 v5" stroke="#fff" stroke-width="5"/><g clip-path="url(#avc)"><rect x="2110" y="110" width="210" height="210" fill="#d8d7da"/><g filter="url(#bl3)"><ellipse cx="2138" cy="180" rx="26" ry="60" fill="#efeef1"/><ellipse cx="2292" cy="235" rx="26" ry="70" fill="#ececee"/><rect x="2110" y="284" width="210" height="40" fill="#f2f1f3"/><path d="M2266 128 l44 44 l-12 40z" fill="#c9c7cc"/><ellipse cx="2150" cy="290" rx="40" ry="20" fill="#f4f3f5"/><ellipse cx="2217" cy="134" rx="40" ry="10" fill="#a9a6a3"/><ellipse cx="2217" cy="134" rx="40" ry="10" fill="none" stroke="#ece7e1" stroke-width="5"/><path d="M2226 268 C2240 272 2256 280 2266 296 L2270 330 H2190 L2200 274z" fill="#f1f0f2"/><path d="M2212 270 l22 0 l6 16 l-24 4z" fill="#e3c7bd"/><path d="M2202 142.500 C2190 144 2180 149 2170 155.500 C2161 162 2154 169 2151 177 C2147 185 2146 194 2146 202 C2146 212 2147 222 2149 232 C2150 242 2151 252 2153 262 C2158 268 2164 274 2170 278 L2202 276.500 L2228 272.500 L2262 268 C2267 262 2270 256 2272.500 249 C2273 238 2272 226 2270.500 215 C2270 208 2269 202 2268 196 C2265 186 2262 178 2257.500 170 C2252 161 2245 154 2236 149 C2226 144 2214 141.500 2202 142.500z" fill="url(#gHair)"/><path d="M2155.500 211 C2158 205 2161 202 2164 200 L2200 219 C2202 230 2203 240 2202 249 C2202 258 2201 265 2200 270.500 C2195 273 2190 274.500 2185 274.500 C2180 271 2176 267 2172.500 262 C2171 258 2170 253 2170.500 249 C2168 246 2165 242 2164 238.500 C2163 235 2162 231 2162 228 C2159 223 2156 217 2155.500 211z" fill="#e7cdc4"/><ellipse cx="2176.500" cy="255" rx="4.500" ry="2.300" fill="#c77f7a" transform="rotate(15 2176.500 255)"/><path d="M2166 222 c4 -2 9 -2 13 0" stroke="#5a4038" stroke-width="2" fill="none"/><path d="M2186 221 c4 -2 8 -1.500 11 .5" stroke="#5a4038" stroke-width="1.800" fill="none"/><path d="M2150 214 C2152 196 2162 180 2178 170 C2192 164 2208 166 2220 172 C2214 184 2210 200 2206 222 C2198 212 2186 204 2172 200 C2164 202 2158 208 2154 222z" fill="#3d2d28"/><path d="M2200 219 C2206 232 2206 256 2200 274 L2230 272 C2224 250 2222 226 2220 200z" fill="#33241f" opacity=".9"/></g><circle cx="2203" cy="216.500" r="1.300" fill="#fff"/><circle cx="2151" cy="181" r="1" fill="#fff"/></g><circle cx="2214" cy="306.700" r="30" fill="#3a3b41"/><g clip-path="url(#micB)"><rect x="2205" y="286" width="18" height="27" fill="#fff"/><rect x="2205" y="295" width="18" height="18" fill="#5fe052"/></g><path d="M2198.500 305.500 a15.500 15.500 0 0 0 31 0" fill="none" stroke="#fff" stroke-width="4"/><path d="M2214 321 v5.500" stroke="#fff" stroke-width="4"/><path d="M2161.500 360.500 a7.500 8.500 0 0 1 7.500 8.500 c0 4 -1.500 6.500 -3 8 c0 2.500 2 4 6 5.500 c5 2 6.500 4 6.500 8.500 h-34 c0 -4.500 1.500 -6.500 6.500 -8.500 c4 -1.500 6 -3 6 -5.500 c-1.500 -1.500 -3 -4 -3 -8 a7.500 8.500 0 0 1 7.500 -8.500z" fill="#fff6ea"/><circle cx="2220" cy="900" r="71.800" fill="#2a2b30"/><rect x="2205" y="863.500" width="30" height="51.500" rx="15" fill="#fff"/><path d="M2194.500 902 a25.500 24 0 0 0 51 0" fill="none" stroke="#fff" stroke-width="5" stroke-linecap="round"/><path d="M2220 926 v10" stroke="#fff" stroke-width="5"/><path d="M2208 936.500 h24" stroke="#fff" stroke-width="5.500" stroke-linecap="round"/><path d="M2246 871.500 L2192 924.500" stroke="#2a2b30" stroke-width="9" stroke-linecap="round"/><path d="M2246 871.500 L2192 924.500" stroke="#e8493d" stroke-width="4.600" stroke-linecap="round"/></svg>
</body>
</html>
